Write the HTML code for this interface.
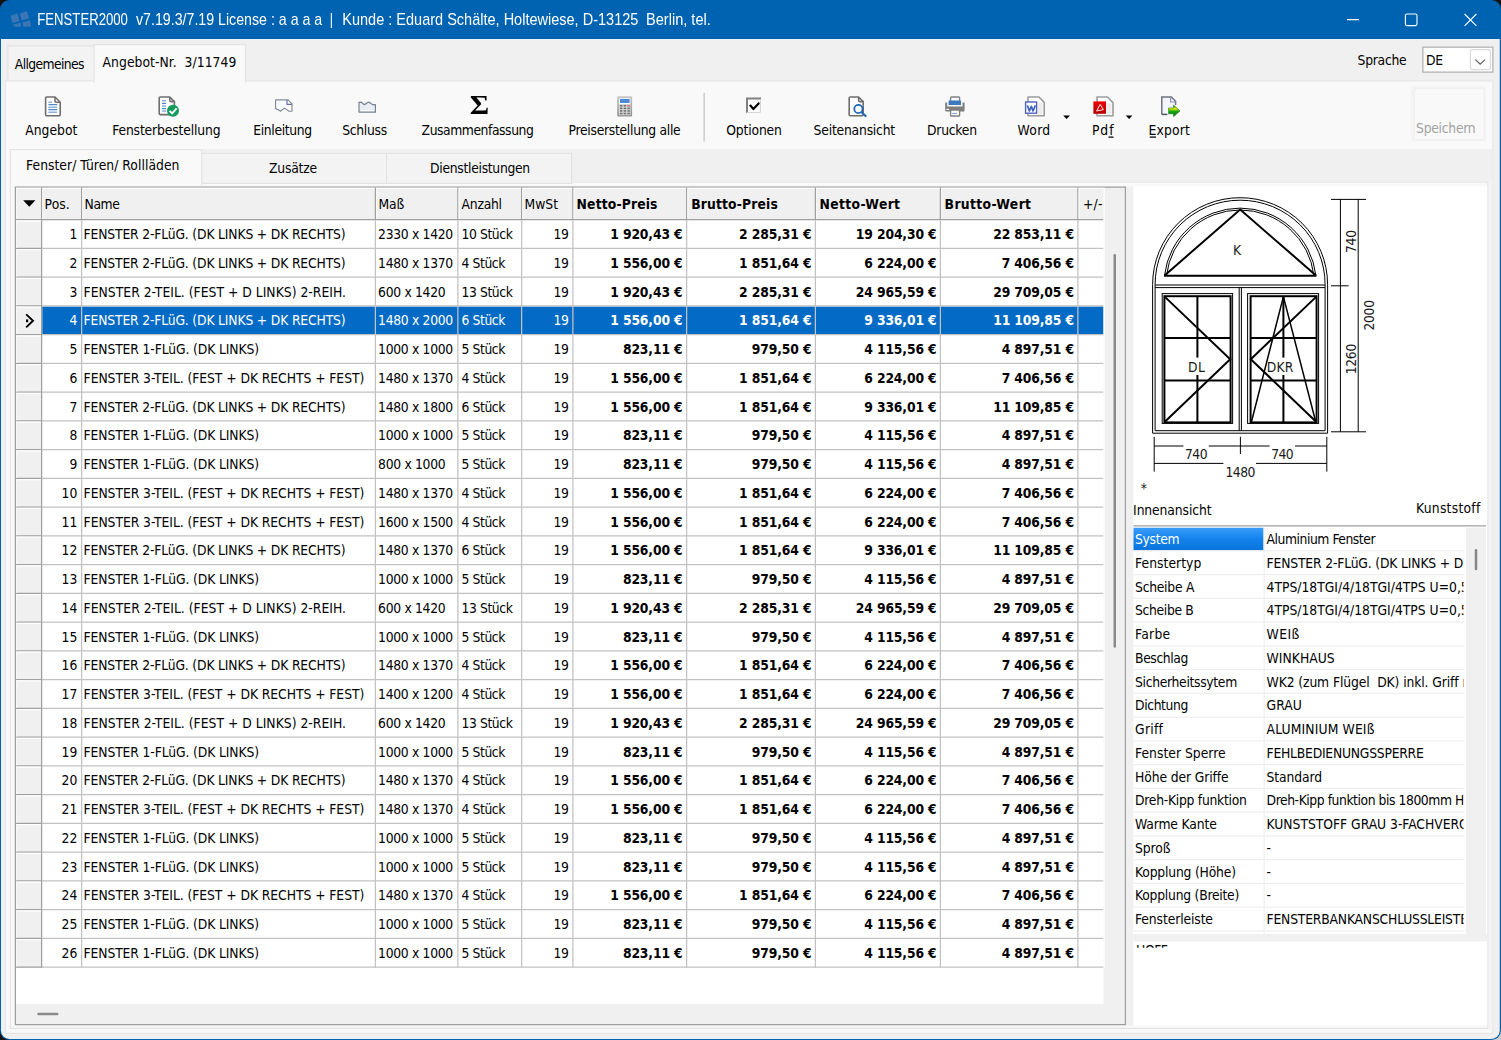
<!DOCTYPE html>
<html lang="de"><head><meta charset="utf-8"><title>FENSTER2000</title>
<style>
html,body{margin:0;padding:0;background:#151311;width:1501px;height:1040px;overflow:hidden}
#brc{position:absolute;left:1490px;top:1029px;width:11px;height:11px;background:#CFCFCF}
#win{position:absolute;left:0;top:0;width:1501px;height:1040px;border-radius:9.5px;overflow:hidden;background:#0063B1}
#s{position:absolute;left:0;top:0;width:1201px;height:832px;transform:translate(-0.25px,0.25px) scale(1.25);transform-origin:0 0;font-family:"DejaVu Sans Condensed","DejaVu Sans","Liberation Sans",sans-serif;font-size:10.7px}
#s div{position:absolute;box-sizing:border-box}
#s svg{position:absolute;overflow:visible}
.t{position:absolute;white-space:pre;margin:0;padding:0}

</style></head><body>
<div id="brc"></div>
<div id="win"><div id="s">
<div style="left:1.00px;top:31.00px;width:1199.20px;height:800.00px;background:#F0F0F0;border-radius:0 0 6.8px 6.8px;"></div>
<span class="t" style="left:29.88px;top:8.00px;font-family:'Liberation Sans','DejaVu Sans',sans-serif;font-size:12.96px;line-height:16px;color:#fff;transform-origin:0 0;transform:scaleX(0.8127);">FENSTER2000</span>
<span class="t" style="left:108.60px;top:8.00px;font-family:'Liberation Sans','DejaVu Sans',sans-serif;font-size:12.96px;line-height:16px;color:#fff;transform-origin:0 0;transform:scaleX(0.8765);">v7.19.3/7.19 License : a a a a</span>
<span class="t" style="left:264.04px;top:8.00px;font-family:'Liberation Sans','DejaVu Sans',sans-serif;font-size:12.96px;line-height:16px;color:#fff;transform-origin:0 0;transform:scaleX(0.7585);">|</span>
<span class="t" style="left:273.72px;top:8.00px;font-family:'Liberation Sans','DejaVu Sans',sans-serif;font-size:12.96px;line-height:16px;color:#fff;transform-origin:0 0;transform:scaleX(0.8964);">Kunde : Eduard Schälte, Holtewiese, D-13125</span>
<span class="t" style="left:517.48px;top:8.00px;font-family:'Liberation Sans','DejaVu Sans',sans-serif;font-size:12.96px;line-height:16px;color:#fff;transform-origin:0 0;transform:scaleX(0.9001);">Berlin, tel.</span>
<div style="left:6.20px;top:36.00px;width:70.00px;height:28.80px;background:#F3F3F3;border:1px solid #E3E3E3;"></div>
<div style="left:4.20px;top:63.80px;width:1191.00px;height:763.20px;background:#F9F9F9;border:1px solid #E5E5E5;"></div>
<div style="left:75.20px;top:34.80px;width:122.00px;height:31.00px;background:#F9F9F9;border:1px solid #E5E5E5;border-bottom:none;"></div>
<span class="t" style="left:12.04px;top:44.00px;font-family:'DejaVu Sans Condensed','DejaVu Sans','Liberation Sans',sans-serif;font-size:11.00px;line-height:16px;color:#000;letter-spacing:-0.496px;">Allgemeines</span>
<span class="t" style="left:82.28px;top:42.00px;font-family:'DejaVu Sans Condensed','DejaVu Sans','Liberation Sans',sans-serif;font-size:11.00px;line-height:16px;color:#000;letter-spacing:0.042px;">Angebot-Nr.  3/11749</span>
<span class="t" style="left:1086.28px;top:41.00px;font-family:'DejaVu Sans Condensed','DejaVu Sans','Liberation Sans',sans-serif;font-size:11.00px;line-height:16px;color:#000;letter-spacing:-0.211px;">Sprache</span>
<div style="left:1138.20px;top:36.80px;width:57.00px;height:21.00px;background:#fff;border:1px solid #ADADAD;"></div>
<div style="left:1176.20px;top:39.20px;width:16.40px;height:16.60px;background:#fff;border:1px solid #DADADA;border-radius:2px;"></div>
<span class="t" style="left:1141.08px;top:41.00px;font-family:'DejaVu Sans Condensed','DejaVu Sans','Liberation Sans',sans-serif;font-size:11.00px;line-height:16px;color:#000;letter-spacing:-0.217px;">DE</span>
<div style="left:8.20px;top:118.80px;width:1186.00px;height:28.00px;background:#F0F0F0;"></div>
<div style="left:8.20px;top:145.40px;width:1185.60px;height:677.80px;background:#F3F3F3;"></div>
<div style="left:8.20px;top:145.40px;width:1183.00px;height:677.80px;background:#F9F9F9;border:1px solid #E5E5E5;"></div>
<div style="left:161.20px;top:121.80px;width:149.00px;height:25.00px;background:#F3F3F3;border:1px solid #E3E3E3;"></div>
<div style="left:310.20px;top:121.80px;width:148.00px;height:25.00px;background:#F3F3F3;border:1px solid #E3E3E3;border-left:none;"></div>
<div style="left:8.20px;top:118.80px;width:154.00px;height:29.00px;background:#F9F9F9;border:1px solid #E5E5E5;border-bottom:none;"></div>
<span class="t" style="left:21.08px;top:125.00px;font-family:'DejaVu Sans Condensed','DejaVu Sans','Liberation Sans',sans-serif;font-size:11.00px;line-height:16px;color:#000;letter-spacing:0.026px;">Fenster/ Türen/ Rollläden</span>
<span class="t" style="left:215.48px;top:127.00px;font-family:'DejaVu Sans Condensed','DejaVu Sans','Liberation Sans',sans-serif;font-size:11.00px;line-height:16px;color:#000;letter-spacing:-0.171px;">Zusätze</span>
<span class="t" style="left:344.28px;top:127.00px;font-family:'DejaVu Sans Condensed','DejaVu Sans','Liberation Sans',sans-serif;font-size:11.00px;line-height:16px;color:#000;letter-spacing:-0.235px;">Dienstleistungen</span>
<div style="left:12.00px;top:149.00px;width:889.00px;height:671.00px;background:#F0F0F0;border:1px solid #A0A0A0;"></div>
<div style="left:13.00px;top:176.00px;width:870.00px;height:627.00px;background:#fff;"></div>
<div style="left:13.00px;top:176.00px;width:20.00px;height:598.00px;background:#F0F0F0;"></div>
<div style="left:34.00px;top:245.00px;width:849.00px;height:22.00px;background:#036BC5;"></div>
<div style="left:13.00px;top:175.00px;width:870.00px;height:1.00px;background:#A0A0A0;"></div>
<div style="left:13.00px;top:198.00px;width:21.00px;height:1.00px;background:#A0A0A0;"></div>
<div style="left:34.00px;top:198.00px;width:849.00px;height:1.00px;background:#C2C2C2;"></div>
<div style="left:13.00px;top:221.00px;width:21.00px;height:1.00px;background:#A0A0A0;"></div>
<div style="left:34.00px;top:221.00px;width:849.00px;height:1.00px;background:#C2C2C2;"></div>
<div style="left:13.00px;top:244.00px;width:21.00px;height:1.00px;background:#A0A0A0;"></div>
<div style="left:34.00px;top:244.00px;width:849.00px;height:1.00px;background:#C2C2C2;"></div>
<div style="left:13.00px;top:267.00px;width:21.00px;height:1.00px;background:#A0A0A0;"></div>
<div style="left:34.00px;top:267.00px;width:849.00px;height:1.00px;background:#C2C2C2;"></div>
<div style="left:13.00px;top:290.00px;width:21.00px;height:1.00px;background:#A0A0A0;"></div>
<div style="left:34.00px;top:290.00px;width:849.00px;height:1.00px;background:#C2C2C2;"></div>
<div style="left:13.00px;top:313.00px;width:21.00px;height:1.00px;background:#A0A0A0;"></div>
<div style="left:34.00px;top:313.00px;width:849.00px;height:1.00px;background:#C2C2C2;"></div>
<div style="left:13.00px;top:336.00px;width:21.00px;height:1.00px;background:#A0A0A0;"></div>
<div style="left:34.00px;top:336.00px;width:849.00px;height:1.00px;background:#C2C2C2;"></div>
<div style="left:13.00px;top:359.00px;width:21.00px;height:1.00px;background:#A0A0A0;"></div>
<div style="left:34.00px;top:359.00px;width:849.00px;height:1.00px;background:#C2C2C2;"></div>
<div style="left:13.00px;top:382.00px;width:21.00px;height:1.00px;background:#A0A0A0;"></div>
<div style="left:34.00px;top:382.00px;width:849.00px;height:1.00px;background:#C2C2C2;"></div>
<div style="left:13.00px;top:405.00px;width:21.00px;height:1.00px;background:#A0A0A0;"></div>
<div style="left:34.00px;top:405.00px;width:849.00px;height:1.00px;background:#C2C2C2;"></div>
<div style="left:13.00px;top:428.00px;width:21.00px;height:1.00px;background:#A0A0A0;"></div>
<div style="left:34.00px;top:428.00px;width:849.00px;height:1.00px;background:#C2C2C2;"></div>
<div style="left:13.00px;top:451.00px;width:21.00px;height:1.00px;background:#A0A0A0;"></div>
<div style="left:34.00px;top:451.00px;width:849.00px;height:1.00px;background:#C2C2C2;"></div>
<div style="left:13.00px;top:474.00px;width:21.00px;height:1.00px;background:#A0A0A0;"></div>
<div style="left:34.00px;top:474.00px;width:849.00px;height:1.00px;background:#C2C2C2;"></div>
<div style="left:13.00px;top:497.00px;width:21.00px;height:1.00px;background:#A0A0A0;"></div>
<div style="left:34.00px;top:497.00px;width:849.00px;height:1.00px;background:#C2C2C2;"></div>
<div style="left:13.00px;top:520.00px;width:21.00px;height:1.00px;background:#A0A0A0;"></div>
<div style="left:34.00px;top:520.00px;width:849.00px;height:1.00px;background:#C2C2C2;"></div>
<div style="left:13.00px;top:543.00px;width:21.00px;height:1.00px;background:#A0A0A0;"></div>
<div style="left:34.00px;top:543.00px;width:849.00px;height:1.00px;background:#C2C2C2;"></div>
<div style="left:13.00px;top:566.00px;width:21.00px;height:1.00px;background:#A0A0A0;"></div>
<div style="left:34.00px;top:566.00px;width:849.00px;height:1.00px;background:#C2C2C2;"></div>
<div style="left:13.00px;top:589.00px;width:21.00px;height:1.00px;background:#A0A0A0;"></div>
<div style="left:34.00px;top:589.00px;width:849.00px;height:1.00px;background:#C2C2C2;"></div>
<div style="left:13.00px;top:612.00px;width:21.00px;height:1.00px;background:#A0A0A0;"></div>
<div style="left:34.00px;top:612.00px;width:849.00px;height:1.00px;background:#C2C2C2;"></div>
<div style="left:13.00px;top:635.00px;width:21.00px;height:1.00px;background:#A0A0A0;"></div>
<div style="left:34.00px;top:635.00px;width:849.00px;height:1.00px;background:#C2C2C2;"></div>
<div style="left:13.00px;top:658.00px;width:21.00px;height:1.00px;background:#A0A0A0;"></div>
<div style="left:34.00px;top:658.00px;width:849.00px;height:1.00px;background:#C2C2C2;"></div>
<div style="left:13.00px;top:681.00px;width:21.00px;height:1.00px;background:#A0A0A0;"></div>
<div style="left:34.00px;top:681.00px;width:849.00px;height:1.00px;background:#C2C2C2;"></div>
<div style="left:13.00px;top:704.00px;width:21.00px;height:1.00px;background:#A0A0A0;"></div>
<div style="left:34.00px;top:704.00px;width:849.00px;height:1.00px;background:#C2C2C2;"></div>
<div style="left:13.00px;top:727.00px;width:21.00px;height:1.00px;background:#A0A0A0;"></div>
<div style="left:34.00px;top:727.00px;width:849.00px;height:1.00px;background:#C2C2C2;"></div>
<div style="left:13.00px;top:750.00px;width:21.00px;height:1.00px;background:#A0A0A0;"></div>
<div style="left:34.00px;top:750.00px;width:849.00px;height:1.00px;background:#C2C2C2;"></div>
<div style="left:13.00px;top:773.00px;width:21.00px;height:1.00px;background:#A0A0A0;"></div>
<div style="left:34.00px;top:773.00px;width:849.00px;height:1.00px;background:#C2C2C2;"></div>
<div style="left:33.00px;top:150.00px;width:1.00px;height:26.00px;background:#A0A0A0;"></div>
<div style="left:33.00px;top:176.00px;width:1.00px;height:598.00px;background:#A0A0A0;"></div>
<div style="left:65.00px;top:150.00px;width:1.00px;height:26.00px;background:#A0A0A0;"></div>
<div style="left:65.00px;top:176.00px;width:1.00px;height:598.00px;background:#C2C2C2;"></div>
<div style="left:300.00px;top:150.00px;width:1.00px;height:26.00px;background:#A0A0A0;"></div>
<div style="left:300.00px;top:176.00px;width:1.00px;height:598.00px;background:#C2C2C2;"></div>
<div style="left:366.00px;top:150.00px;width:1.00px;height:26.00px;background:#A0A0A0;"></div>
<div style="left:366.00px;top:176.00px;width:1.00px;height:598.00px;background:#C2C2C2;"></div>
<div style="left:417.00px;top:150.00px;width:1.00px;height:26.00px;background:#A0A0A0;"></div>
<div style="left:417.00px;top:176.00px;width:1.00px;height:598.00px;background:#C2C2C2;"></div>
<div style="left:458.00px;top:150.00px;width:1.00px;height:26.00px;background:#A0A0A0;"></div>
<div style="left:458.00px;top:176.00px;width:1.00px;height:598.00px;background:#C2C2C2;"></div>
<div style="left:549.00px;top:150.00px;width:1.00px;height:26.00px;background:#A0A0A0;"></div>
<div style="left:549.00px;top:176.00px;width:1.00px;height:598.00px;background:#C2C2C2;"></div>
<div style="left:652.00px;top:150.00px;width:1.00px;height:26.00px;background:#A0A0A0;"></div>
<div style="left:652.00px;top:176.00px;width:1.00px;height:598.00px;background:#C2C2C2;"></div>
<div style="left:752.00px;top:150.00px;width:1.00px;height:26.00px;background:#A0A0A0;"></div>
<div style="left:752.00px;top:176.00px;width:1.00px;height:598.00px;background:#C2C2C2;"></div>
<div style="left:862.00px;top:150.00px;width:1.00px;height:26.00px;background:#A0A0A0;"></div>
<div style="left:862.00px;top:176.00px;width:1.00px;height:598.00px;background:#C2C2C2;"></div>
<div style="left:13.00px;top:150.00px;width:20.00px;height:1.00px;background:#fff;"></div>
<div style="left:13.00px;top:151.00px;width:1.00px;height:24.00px;background:#F8F8F8;"></div>
<div style="left:34.00px;top:150.00px;width:31.00px;height:1.00px;background:#fff;"></div>
<div style="left:34.00px;top:151.00px;width:1.00px;height:24.00px;background:#F8F8F8;"></div>
<div style="left:66.00px;top:150.00px;width:234.00px;height:1.00px;background:#fff;"></div>
<div style="left:66.00px;top:151.00px;width:1.00px;height:24.00px;background:#F8F8F8;"></div>
<div style="left:301.00px;top:150.00px;width:65.00px;height:1.00px;background:#fff;"></div>
<div style="left:301.00px;top:151.00px;width:1.00px;height:24.00px;background:#F8F8F8;"></div>
<div style="left:367.00px;top:150.00px;width:50.00px;height:1.00px;background:#fff;"></div>
<div style="left:367.00px;top:151.00px;width:1.00px;height:24.00px;background:#F8F8F8;"></div>
<div style="left:418.00px;top:150.00px;width:40.00px;height:1.00px;background:#fff;"></div>
<div style="left:418.00px;top:151.00px;width:1.00px;height:24.00px;background:#F8F8F8;"></div>
<div style="left:459.00px;top:150.00px;width:90.00px;height:1.00px;background:#fff;"></div>
<div style="left:459.00px;top:151.00px;width:1.00px;height:24.00px;background:#F8F8F8;"></div>
<div style="left:550.00px;top:150.00px;width:102.00px;height:1.00px;background:#fff;"></div>
<div style="left:550.00px;top:151.00px;width:1.00px;height:24.00px;background:#F8F8F8;"></div>
<div style="left:653.00px;top:150.00px;width:99.00px;height:1.00px;background:#fff;"></div>
<div style="left:653.00px;top:151.00px;width:1.00px;height:24.00px;background:#F8F8F8;"></div>
<div style="left:753.00px;top:150.00px;width:109.00px;height:1.00px;background:#fff;"></div>
<div style="left:753.00px;top:151.00px;width:1.00px;height:24.00px;background:#F8F8F8;"></div>
<div style="left:863.00px;top:150.00px;width:20.00px;height:1.00px;background:#fff;"></div>
<div style="left:863.00px;top:151.00px;width:1.00px;height:24.00px;background:#F8F8F8;"></div>
<div style="left:883.00px;top:150.00px;width:1.00px;height:624.00px;background:#fff;"></div>
<div style="left:13.00px;top:176.00px;width:20.00px;height:1.00px;background:#fff;"></div>
<div style="left:13.00px;top:177.00px;width:1.00px;height:21.00px;background:#F8F8F8;"></div>
<div style="left:13.00px;top:199.00px;width:20.00px;height:1.00px;background:#fff;"></div>
<div style="left:13.00px;top:200.00px;width:1.00px;height:21.00px;background:#F8F8F8;"></div>
<div style="left:13.00px;top:222.00px;width:20.00px;height:1.00px;background:#fff;"></div>
<div style="left:13.00px;top:223.00px;width:1.00px;height:21.00px;background:#F8F8F8;"></div>
<div style="left:13.00px;top:245.00px;width:20.00px;height:1.00px;background:#fff;"></div>
<div style="left:13.00px;top:246.00px;width:1.00px;height:21.00px;background:#F8F8F8;"></div>
<div style="left:13.00px;top:268.00px;width:20.00px;height:1.00px;background:#fff;"></div>
<div style="left:13.00px;top:269.00px;width:1.00px;height:21.00px;background:#F8F8F8;"></div>
<div style="left:13.00px;top:291.00px;width:20.00px;height:1.00px;background:#fff;"></div>
<div style="left:13.00px;top:292.00px;width:1.00px;height:21.00px;background:#F8F8F8;"></div>
<div style="left:13.00px;top:314.00px;width:20.00px;height:1.00px;background:#fff;"></div>
<div style="left:13.00px;top:315.00px;width:1.00px;height:21.00px;background:#F8F8F8;"></div>
<div style="left:13.00px;top:337.00px;width:20.00px;height:1.00px;background:#fff;"></div>
<div style="left:13.00px;top:338.00px;width:1.00px;height:21.00px;background:#F8F8F8;"></div>
<div style="left:13.00px;top:360.00px;width:20.00px;height:1.00px;background:#fff;"></div>
<div style="left:13.00px;top:361.00px;width:1.00px;height:21.00px;background:#F8F8F8;"></div>
<div style="left:13.00px;top:383.00px;width:20.00px;height:1.00px;background:#fff;"></div>
<div style="left:13.00px;top:384.00px;width:1.00px;height:21.00px;background:#F8F8F8;"></div>
<div style="left:13.00px;top:406.00px;width:20.00px;height:1.00px;background:#fff;"></div>
<div style="left:13.00px;top:407.00px;width:1.00px;height:21.00px;background:#F8F8F8;"></div>
<div style="left:13.00px;top:429.00px;width:20.00px;height:1.00px;background:#fff;"></div>
<div style="left:13.00px;top:430.00px;width:1.00px;height:21.00px;background:#F8F8F8;"></div>
<div style="left:13.00px;top:452.00px;width:20.00px;height:1.00px;background:#fff;"></div>
<div style="left:13.00px;top:453.00px;width:1.00px;height:21.00px;background:#F8F8F8;"></div>
<div style="left:13.00px;top:475.00px;width:20.00px;height:1.00px;background:#fff;"></div>
<div style="left:13.00px;top:476.00px;width:1.00px;height:21.00px;background:#F8F8F8;"></div>
<div style="left:13.00px;top:498.00px;width:20.00px;height:1.00px;background:#fff;"></div>
<div style="left:13.00px;top:499.00px;width:1.00px;height:21.00px;background:#F8F8F8;"></div>
<div style="left:13.00px;top:521.00px;width:20.00px;height:1.00px;background:#fff;"></div>
<div style="left:13.00px;top:522.00px;width:1.00px;height:21.00px;background:#F8F8F8;"></div>
<div style="left:13.00px;top:544.00px;width:20.00px;height:1.00px;background:#fff;"></div>
<div style="left:13.00px;top:545.00px;width:1.00px;height:21.00px;background:#F8F8F8;"></div>
<div style="left:13.00px;top:567.00px;width:20.00px;height:1.00px;background:#fff;"></div>
<div style="left:13.00px;top:568.00px;width:1.00px;height:21.00px;background:#F8F8F8;"></div>
<div style="left:13.00px;top:590.00px;width:20.00px;height:1.00px;background:#fff;"></div>
<div style="left:13.00px;top:591.00px;width:1.00px;height:21.00px;background:#F8F8F8;"></div>
<div style="left:13.00px;top:613.00px;width:20.00px;height:1.00px;background:#fff;"></div>
<div style="left:13.00px;top:614.00px;width:1.00px;height:21.00px;background:#F8F8F8;"></div>
<div style="left:13.00px;top:636.00px;width:20.00px;height:1.00px;background:#fff;"></div>
<div style="left:13.00px;top:637.00px;width:1.00px;height:21.00px;background:#F8F8F8;"></div>
<div style="left:13.00px;top:659.00px;width:20.00px;height:1.00px;background:#fff;"></div>
<div style="left:13.00px;top:660.00px;width:1.00px;height:21.00px;background:#F8F8F8;"></div>
<div style="left:13.00px;top:682.00px;width:20.00px;height:1.00px;background:#fff;"></div>
<div style="left:13.00px;top:683.00px;width:1.00px;height:21.00px;background:#F8F8F8;"></div>
<div style="left:13.00px;top:705.00px;width:20.00px;height:1.00px;background:#fff;"></div>
<div style="left:13.00px;top:706.00px;width:1.00px;height:21.00px;background:#F8F8F8;"></div>
<div style="left:13.00px;top:728.00px;width:20.00px;height:1.00px;background:#fff;"></div>
<div style="left:13.00px;top:729.00px;width:1.00px;height:21.00px;background:#F8F8F8;"></div>
<div style="left:13.00px;top:751.00px;width:20.00px;height:1.00px;background:#fff;"></div>
<div style="left:13.00px;top:752.00px;width:1.00px;height:21.00px;background:#F8F8F8;"></div>
<div style="left:29.80px;top:810.36px;width:17.20px;height:1.76px;background:#8A8A8A;border-radius:1px;"></div>
<div style="left:890.84px;top:203.00px;width:2.16px;height:315.04px;background:#8A8A8A;border-radius:1px;"></div>
<div style="left:901.20px;top:148.80px;width:6.00px;height:671.16px;background:#F0F0F0;"></div>
<span class="t" style="left:35.88px;top:156.00px;font-family:'DejaVu Sans Condensed','DejaVu Sans','Liberation Sans',sans-serif;font-size:11.00px;line-height:16px;color:#000;letter-spacing:0.076px;">Pos.</span>
<span class="t" style="left:67.88px;top:156.00px;font-family:'DejaVu Sans Condensed','DejaVu Sans','Liberation Sans',sans-serif;font-size:11.00px;line-height:16px;color:#000;letter-spacing:-0.341px;">Name</span>
<span class="t" style="left:303.08px;top:156.00px;font-family:'DejaVu Sans Condensed','DejaVu Sans','Liberation Sans',sans-serif;font-size:11.00px;line-height:16px;color:#000;letter-spacing:-0.175px;">Maß</span>
<span class="t" style="left:369.48px;top:156.00px;font-family:'DejaVu Sans Condensed','DejaVu Sans','Liberation Sans',sans-serif;font-size:11.00px;line-height:16px;color:#000;letter-spacing:-0.195px;">Anzahl</span>
<span class="t" style="left:419.88px;top:156.00px;font-family:'DejaVu Sans Condensed','DejaVu Sans','Liberation Sans',sans-serif;font-size:11.00px;line-height:16px;color:#000;letter-spacing:-0.019px;">MwSt</span>
<span class="t" style="left:461.48px;top:156.00px;font-family:'DejaVu Sans Condensed','DejaVu Sans','Liberation Sans',sans-serif;font-size:11.00px;line-height:16px;color:#000;font-weight:bold;letter-spacing:0.121px;">Netto-Preis</span>
<span class="t" style="left:553.16px;top:156.00px;font-family:'DejaVu Sans Condensed','DejaVu Sans','Liberation Sans',sans-serif;font-size:11.00px;line-height:16px;color:#000;font-weight:bold;letter-spacing:0.121px;">Brutto-Preis</span>
<span class="t" style="left:655.88px;top:156.00px;font-family:'DejaVu Sans Condensed','DejaVu Sans','Liberation Sans',sans-serif;font-size:11.00px;line-height:16px;color:#000;font-weight:bold;letter-spacing:0.291px;">Netto-Wert</span>
<span class="t" style="left:755.88px;top:156.00px;font-family:'DejaVu Sans Condensed','DejaVu Sans','Liberation Sans',sans-serif;font-size:11.00px;line-height:16px;color:#000;font-weight:bold;letter-spacing:0.293px;">Brutto-Wert</span>
<span class="t" style="left:866.60px;top:156.00px;font-family:'DejaVu Sans Condensed','DejaVu Sans','Liberation Sans',sans-serif;font-size:11.00px;line-height:16px;color:#000;letter-spacing:0.212px;">+/-</span>
<span class="t" style="left:55.82px;top:180.00px;font-family:'DejaVu Sans Condensed','DejaVu Sans','Liberation Sans',sans-serif;font-size:11.00px;line-height:16px;color:#000;letter-spacing:0.183px;">1</span>
<span class="t" style="left:67.08px;top:180.00px;font-family:'DejaVu Sans Condensed','DejaVu Sans','Liberation Sans',sans-serif;font-size:11.00px;line-height:16px;color:#000;letter-spacing:-0.127px;">FENSTER 2-FLüG. (DK LINKS + DK RECHTS)</span>
<span class="t" style="left:302.68px;top:180.00px;font-family:'DejaVu Sans Condensed','DejaVu Sans','Liberation Sans',sans-serif;font-size:11.00px;line-height:16px;color:#000;letter-spacing:-0.242px;">2330 x 1420</span>
<span class="t" style="left:369.48px;top:180.00px;font-family:'DejaVu Sans Condensed','DejaVu Sans','Liberation Sans',sans-serif;font-size:11.00px;line-height:16px;color:#000;letter-spacing:-0.338px;">10 Stück</span>
<span class="t" style="left:443.10px;top:180.00px;font-family:'DejaVu Sans Condensed','DejaVu Sans','Liberation Sans',sans-serif;font-size:11.00px;line-height:16px;color:#000;letter-spacing:-0.377px;">19</span>
<span class="t" style="left:488.40px;top:180.00px;font-family:'DejaVu Sans Condensed','DejaVu Sans','Liberation Sans',sans-serif;font-size:11.00px;line-height:16px;color:#000;font-weight:bold;letter-spacing:-0.099px;">1 920,43 €</span>
<span class="t" style="left:591.44px;top:180.00px;font-family:'DejaVu Sans Condensed','DejaVu Sans','Liberation Sans',sans-serif;font-size:11.00px;line-height:16px;color:#000;font-weight:bold;letter-spacing:-0.099px;">2 285,31 €</span>
<span class="t" style="left:684.82px;top:180.00px;font-family:'DejaVu Sans Condensed','DejaVu Sans','Liberation Sans',sans-serif;font-size:11.00px;line-height:16px;color:#000;font-weight:bold;letter-spacing:-0.099px;">19 204,30 €</span>
<span class="t" style="left:794.74px;top:180.00px;font-family:'DejaVu Sans Condensed','DejaVu Sans','Liberation Sans',sans-serif;font-size:11.00px;line-height:16px;color:#000;font-weight:bold;letter-spacing:-0.099px;">22 853,11 €</span>
<span class="t" style="left:55.82px;top:203.00px;font-family:'DejaVu Sans Condensed','DejaVu Sans','Liberation Sans',sans-serif;font-size:11.00px;line-height:16px;color:#000;letter-spacing:0.183px;">2</span>
<span class="t" style="left:67.08px;top:203.00px;font-family:'DejaVu Sans Condensed','DejaVu Sans','Liberation Sans',sans-serif;font-size:11.00px;line-height:16px;color:#000;letter-spacing:-0.127px;">FENSTER 2-FLüG. (DK LINKS + DK RECHTS)</span>
<span class="t" style="left:302.68px;top:203.00px;font-family:'DejaVu Sans Condensed','DejaVu Sans','Liberation Sans',sans-serif;font-size:11.00px;line-height:16px;color:#000;letter-spacing:-0.242px;">1480 x 1370</span>
<span class="t" style="left:369.48px;top:203.00px;font-family:'DejaVu Sans Condensed','DejaVu Sans','Liberation Sans',sans-serif;font-size:11.00px;line-height:16px;color:#000;letter-spacing:-0.338px;">4 Stück</span>
<span class="t" style="left:443.10px;top:203.00px;font-family:'DejaVu Sans Condensed','DejaVu Sans','Liberation Sans',sans-serif;font-size:11.00px;line-height:16px;color:#000;letter-spacing:-0.377px;">19</span>
<span class="t" style="left:488.40px;top:203.00px;font-family:'DejaVu Sans Condensed','DejaVu Sans','Liberation Sans',sans-serif;font-size:11.00px;line-height:16px;color:#000;font-weight:bold;letter-spacing:-0.099px;">1 556,00 €</span>
<span class="t" style="left:591.44px;top:203.00px;font-family:'DejaVu Sans Condensed','DejaVu Sans','Liberation Sans',sans-serif;font-size:11.00px;line-height:16px;color:#000;font-weight:bold;letter-spacing:-0.099px;">1 851,64 €</span>
<span class="t" style="left:691.60px;top:203.00px;font-family:'DejaVu Sans Condensed','DejaVu Sans','Liberation Sans',sans-serif;font-size:11.00px;line-height:16px;color:#000;font-weight:bold;letter-spacing:-0.099px;">6 224,00 €</span>
<span class="t" style="left:801.52px;top:203.00px;font-family:'DejaVu Sans Condensed','DejaVu Sans','Liberation Sans',sans-serif;font-size:11.00px;line-height:16px;color:#000;font-weight:bold;letter-spacing:-0.099px;">7 406,56 €</span>
<span class="t" style="left:55.82px;top:226.00px;font-family:'DejaVu Sans Condensed','DejaVu Sans','Liberation Sans',sans-serif;font-size:11.00px;line-height:16px;color:#000;letter-spacing:0.183px;">3</span>
<span class="t" style="left:67.08px;top:226.00px;font-family:'DejaVu Sans Condensed','DejaVu Sans','Liberation Sans',sans-serif;font-size:11.00px;line-height:16px;color:#000;letter-spacing:0.018px;">FENSTER 2-TEIL. (FEST + D LINKS) 2-REIH.</span>
<span class="t" style="left:302.68px;top:226.00px;font-family:'DejaVu Sans Condensed','DejaVu Sans','Liberation Sans',sans-serif;font-size:11.00px;line-height:16px;color:#000;letter-spacing:-0.242px;">600 x 1420</span>
<span class="t" style="left:369.48px;top:226.00px;font-family:'DejaVu Sans Condensed','DejaVu Sans','Liberation Sans',sans-serif;font-size:11.00px;line-height:16px;color:#000;letter-spacing:-0.338px;">13 Stück</span>
<span class="t" style="left:443.10px;top:226.00px;font-family:'DejaVu Sans Condensed','DejaVu Sans','Liberation Sans',sans-serif;font-size:11.00px;line-height:16px;color:#000;letter-spacing:-0.377px;">19</span>
<span class="t" style="left:488.40px;top:226.00px;font-family:'DejaVu Sans Condensed','DejaVu Sans','Liberation Sans',sans-serif;font-size:11.00px;line-height:16px;color:#000;font-weight:bold;letter-spacing:-0.099px;">1 920,43 €</span>
<span class="t" style="left:591.44px;top:226.00px;font-family:'DejaVu Sans Condensed','DejaVu Sans','Liberation Sans',sans-serif;font-size:11.00px;line-height:16px;color:#000;font-weight:bold;letter-spacing:-0.099px;">2 285,31 €</span>
<span class="t" style="left:684.82px;top:226.00px;font-family:'DejaVu Sans Condensed','DejaVu Sans','Liberation Sans',sans-serif;font-size:11.00px;line-height:16px;color:#000;font-weight:bold;letter-spacing:-0.099px;">24 965,59 €</span>
<span class="t" style="left:794.74px;top:226.00px;font-family:'DejaVu Sans Condensed','DejaVu Sans','Liberation Sans',sans-serif;font-size:11.00px;line-height:16px;color:#000;font-weight:bold;letter-spacing:-0.099px;">29 709,05 €</span>
<span class="t" style="left:55.82px;top:249.00px;font-family:'DejaVu Sans Condensed','DejaVu Sans','Liberation Sans',sans-serif;font-size:11.00px;line-height:16px;color:#fff;letter-spacing:0.183px;">4</span>
<span class="t" style="left:67.08px;top:249.00px;font-family:'DejaVu Sans Condensed','DejaVu Sans','Liberation Sans',sans-serif;font-size:11.00px;line-height:16px;color:#fff;letter-spacing:-0.127px;">FENSTER 2-FLüG. (DK LINKS + DK RECHTS)</span>
<span class="t" style="left:302.68px;top:249.00px;font-family:'DejaVu Sans Condensed','DejaVu Sans','Liberation Sans',sans-serif;font-size:11.00px;line-height:16px;color:#fff;letter-spacing:-0.242px;">1480 x 2000</span>
<span class="t" style="left:369.48px;top:249.00px;font-family:'DejaVu Sans Condensed','DejaVu Sans','Liberation Sans',sans-serif;font-size:11.00px;line-height:16px;color:#fff;letter-spacing:-0.338px;">6 Stück</span>
<span class="t" style="left:443.10px;top:249.00px;font-family:'DejaVu Sans Condensed','DejaVu Sans','Liberation Sans',sans-serif;font-size:11.00px;line-height:16px;color:#fff;letter-spacing:-0.377px;">19</span>
<span class="t" style="left:488.40px;top:249.00px;font-family:'DejaVu Sans Condensed','DejaVu Sans','Liberation Sans',sans-serif;font-size:11.00px;line-height:16px;color:#fff;font-weight:bold;letter-spacing:-0.099px;">1 556,00 €</span>
<span class="t" style="left:591.44px;top:249.00px;font-family:'DejaVu Sans Condensed','DejaVu Sans','Liberation Sans',sans-serif;font-size:11.00px;line-height:16px;color:#fff;font-weight:bold;letter-spacing:-0.099px;">1 851,64 €</span>
<span class="t" style="left:691.60px;top:249.00px;font-family:'DejaVu Sans Condensed','DejaVu Sans','Liberation Sans',sans-serif;font-size:11.00px;line-height:16px;color:#fff;font-weight:bold;letter-spacing:-0.099px;">9 336,01 €</span>
<span class="t" style="left:794.74px;top:249.00px;font-family:'DejaVu Sans Condensed','DejaVu Sans','Liberation Sans',sans-serif;font-size:11.00px;line-height:16px;color:#fff;font-weight:bold;letter-spacing:-0.099px;">11 109,85 €</span>
<span class="t" style="left:55.82px;top:272.00px;font-family:'DejaVu Sans Condensed','DejaVu Sans','Liberation Sans',sans-serif;font-size:11.00px;line-height:16px;color:#000;letter-spacing:0.183px;">5</span>
<span class="t" style="left:67.08px;top:272.00px;font-family:'DejaVu Sans Condensed','DejaVu Sans','Liberation Sans',sans-serif;font-size:11.00px;line-height:16px;color:#000;letter-spacing:-0.092px;">FENSTER 1-FLüG. (DK LINKS)</span>
<span class="t" style="left:302.68px;top:272.00px;font-family:'DejaVu Sans Condensed','DejaVu Sans','Liberation Sans',sans-serif;font-size:11.00px;line-height:16px;color:#000;letter-spacing:-0.242px;">1000 x 1000</span>
<span class="t" style="left:369.48px;top:272.00px;font-family:'DejaVu Sans Condensed','DejaVu Sans','Liberation Sans',sans-serif;font-size:11.00px;line-height:16px;color:#000;letter-spacing:-0.338px;">5 Stück</span>
<span class="t" style="left:443.10px;top:272.00px;font-family:'DejaVu Sans Condensed','DejaVu Sans','Liberation Sans',sans-serif;font-size:11.00px;line-height:16px;color:#000;letter-spacing:-0.377px;">19</span>
<span class="t" style="left:498.53px;top:272.00px;font-family:'DejaVu Sans Condensed','DejaVu Sans','Liberation Sans',sans-serif;font-size:11.00px;line-height:16px;color:#000;font-weight:bold;letter-spacing:-0.099px;">823,11 €</span>
<span class="t" style="left:601.57px;top:272.00px;font-family:'DejaVu Sans Condensed','DejaVu Sans','Liberation Sans',sans-serif;font-size:11.00px;line-height:16px;color:#000;font-weight:bold;letter-spacing:-0.099px;">979,50 €</span>
<span class="t" style="left:691.60px;top:272.00px;font-family:'DejaVu Sans Condensed','DejaVu Sans','Liberation Sans',sans-serif;font-size:11.00px;line-height:16px;color:#000;font-weight:bold;letter-spacing:-0.099px;">4 115,56 €</span>
<span class="t" style="left:801.52px;top:272.00px;font-family:'DejaVu Sans Condensed','DejaVu Sans','Liberation Sans',sans-serif;font-size:11.00px;line-height:16px;color:#000;font-weight:bold;letter-spacing:-0.099px;">4 897,51 €</span>
<span class="t" style="left:55.82px;top:295.00px;font-family:'DejaVu Sans Condensed','DejaVu Sans','Liberation Sans',sans-serif;font-size:11.00px;line-height:16px;color:#000;letter-spacing:0.183px;">6</span>
<span class="t" style="left:67.08px;top:295.00px;font-family:'DejaVu Sans Condensed','DejaVu Sans','Liberation Sans',sans-serif;font-size:11.00px;line-height:16px;color:#000;letter-spacing:-0.044px;">FENSTER 3-TEIL. (FEST + DK RECHTS + FEST)</span>
<span class="t" style="left:302.68px;top:295.00px;font-family:'DejaVu Sans Condensed','DejaVu Sans','Liberation Sans',sans-serif;font-size:11.00px;line-height:16px;color:#000;letter-spacing:-0.242px;">1480 x 1370</span>
<span class="t" style="left:369.48px;top:295.00px;font-family:'DejaVu Sans Condensed','DejaVu Sans','Liberation Sans',sans-serif;font-size:11.00px;line-height:16px;color:#000;letter-spacing:-0.338px;">4 Stück</span>
<span class="t" style="left:443.10px;top:295.00px;font-family:'DejaVu Sans Condensed','DejaVu Sans','Liberation Sans',sans-serif;font-size:11.00px;line-height:16px;color:#000;letter-spacing:-0.377px;">19</span>
<span class="t" style="left:488.40px;top:295.00px;font-family:'DejaVu Sans Condensed','DejaVu Sans','Liberation Sans',sans-serif;font-size:11.00px;line-height:16px;color:#000;font-weight:bold;letter-spacing:-0.099px;">1 556,00 €</span>
<span class="t" style="left:591.44px;top:295.00px;font-family:'DejaVu Sans Condensed','DejaVu Sans','Liberation Sans',sans-serif;font-size:11.00px;line-height:16px;color:#000;font-weight:bold;letter-spacing:-0.099px;">1 851,64 €</span>
<span class="t" style="left:691.60px;top:295.00px;font-family:'DejaVu Sans Condensed','DejaVu Sans','Liberation Sans',sans-serif;font-size:11.00px;line-height:16px;color:#000;font-weight:bold;letter-spacing:-0.099px;">6 224,00 €</span>
<span class="t" style="left:801.52px;top:295.00px;font-family:'DejaVu Sans Condensed','DejaVu Sans','Liberation Sans',sans-serif;font-size:11.00px;line-height:16px;color:#000;font-weight:bold;letter-spacing:-0.099px;">7 406,56 €</span>
<span class="t" style="left:55.82px;top:318.00px;font-family:'DejaVu Sans Condensed','DejaVu Sans','Liberation Sans',sans-serif;font-size:11.00px;line-height:16px;color:#000;letter-spacing:0.183px;">7</span>
<span class="t" style="left:67.08px;top:318.00px;font-family:'DejaVu Sans Condensed','DejaVu Sans','Liberation Sans',sans-serif;font-size:11.00px;line-height:16px;color:#000;letter-spacing:-0.127px;">FENSTER 2-FLüG. (DK LINKS + DK RECHTS)</span>
<span class="t" style="left:302.68px;top:318.00px;font-family:'DejaVu Sans Condensed','DejaVu Sans','Liberation Sans',sans-serif;font-size:11.00px;line-height:16px;color:#000;letter-spacing:-0.242px;">1480 x 1800</span>
<span class="t" style="left:369.48px;top:318.00px;font-family:'DejaVu Sans Condensed','DejaVu Sans','Liberation Sans',sans-serif;font-size:11.00px;line-height:16px;color:#000;letter-spacing:-0.338px;">6 Stück</span>
<span class="t" style="left:443.10px;top:318.00px;font-family:'DejaVu Sans Condensed','DejaVu Sans','Liberation Sans',sans-serif;font-size:11.00px;line-height:16px;color:#000;letter-spacing:-0.377px;">19</span>
<span class="t" style="left:488.40px;top:318.00px;font-family:'DejaVu Sans Condensed','DejaVu Sans','Liberation Sans',sans-serif;font-size:11.00px;line-height:16px;color:#000;font-weight:bold;letter-spacing:-0.099px;">1 556,00 €</span>
<span class="t" style="left:591.44px;top:318.00px;font-family:'DejaVu Sans Condensed','DejaVu Sans','Liberation Sans',sans-serif;font-size:11.00px;line-height:16px;color:#000;font-weight:bold;letter-spacing:-0.099px;">1 851,64 €</span>
<span class="t" style="left:691.60px;top:318.00px;font-family:'DejaVu Sans Condensed','DejaVu Sans','Liberation Sans',sans-serif;font-size:11.00px;line-height:16px;color:#000;font-weight:bold;letter-spacing:-0.099px;">9 336,01 €</span>
<span class="t" style="left:794.74px;top:318.00px;font-family:'DejaVu Sans Condensed','DejaVu Sans','Liberation Sans',sans-serif;font-size:11.00px;line-height:16px;color:#000;font-weight:bold;letter-spacing:-0.099px;">11 109,85 €</span>
<span class="t" style="left:55.82px;top:341.00px;font-family:'DejaVu Sans Condensed','DejaVu Sans','Liberation Sans',sans-serif;font-size:11.00px;line-height:16px;color:#000;letter-spacing:0.183px;">8</span>
<span class="t" style="left:67.08px;top:341.00px;font-family:'DejaVu Sans Condensed','DejaVu Sans','Liberation Sans',sans-serif;font-size:11.00px;line-height:16px;color:#000;letter-spacing:-0.092px;">FENSTER 1-FLüG. (DK LINKS)</span>
<span class="t" style="left:302.68px;top:341.00px;font-family:'DejaVu Sans Condensed','DejaVu Sans','Liberation Sans',sans-serif;font-size:11.00px;line-height:16px;color:#000;letter-spacing:-0.242px;">1000 x 1000</span>
<span class="t" style="left:369.48px;top:341.00px;font-family:'DejaVu Sans Condensed','DejaVu Sans','Liberation Sans',sans-serif;font-size:11.00px;line-height:16px;color:#000;letter-spacing:-0.338px;">5 Stück</span>
<span class="t" style="left:443.10px;top:341.00px;font-family:'DejaVu Sans Condensed','DejaVu Sans','Liberation Sans',sans-serif;font-size:11.00px;line-height:16px;color:#000;letter-spacing:-0.377px;">19</span>
<span class="t" style="left:498.53px;top:341.00px;font-family:'DejaVu Sans Condensed','DejaVu Sans','Liberation Sans',sans-serif;font-size:11.00px;line-height:16px;color:#000;font-weight:bold;letter-spacing:-0.099px;">823,11 €</span>
<span class="t" style="left:601.57px;top:341.00px;font-family:'DejaVu Sans Condensed','DejaVu Sans','Liberation Sans',sans-serif;font-size:11.00px;line-height:16px;color:#000;font-weight:bold;letter-spacing:-0.099px;">979,50 €</span>
<span class="t" style="left:691.60px;top:341.00px;font-family:'DejaVu Sans Condensed','DejaVu Sans','Liberation Sans',sans-serif;font-size:11.00px;line-height:16px;color:#000;font-weight:bold;letter-spacing:-0.099px;">4 115,56 €</span>
<span class="t" style="left:801.52px;top:341.00px;font-family:'DejaVu Sans Condensed','DejaVu Sans','Liberation Sans',sans-serif;font-size:11.00px;line-height:16px;color:#000;font-weight:bold;letter-spacing:-0.099px;">4 897,51 €</span>
<span class="t" style="left:55.82px;top:364.00px;font-family:'DejaVu Sans Condensed','DejaVu Sans','Liberation Sans',sans-serif;font-size:11.00px;line-height:16px;color:#000;letter-spacing:0.183px;">9</span>
<span class="t" style="left:67.08px;top:364.00px;font-family:'DejaVu Sans Condensed','DejaVu Sans','Liberation Sans',sans-serif;font-size:11.00px;line-height:16px;color:#000;letter-spacing:-0.092px;">FENSTER 1-FLüG. (DK LINKS)</span>
<span class="t" style="left:302.68px;top:364.00px;font-family:'DejaVu Sans Condensed','DejaVu Sans','Liberation Sans',sans-serif;font-size:11.00px;line-height:16px;color:#000;letter-spacing:-0.242px;">800 x 1000</span>
<span class="t" style="left:369.48px;top:364.00px;font-family:'DejaVu Sans Condensed','DejaVu Sans','Liberation Sans',sans-serif;font-size:11.00px;line-height:16px;color:#000;letter-spacing:-0.338px;">5 Stück</span>
<span class="t" style="left:443.10px;top:364.00px;font-family:'DejaVu Sans Condensed','DejaVu Sans','Liberation Sans',sans-serif;font-size:11.00px;line-height:16px;color:#000;letter-spacing:-0.377px;">19</span>
<span class="t" style="left:498.53px;top:364.00px;font-family:'DejaVu Sans Condensed','DejaVu Sans','Liberation Sans',sans-serif;font-size:11.00px;line-height:16px;color:#000;font-weight:bold;letter-spacing:-0.099px;">823,11 €</span>
<span class="t" style="left:601.57px;top:364.00px;font-family:'DejaVu Sans Condensed','DejaVu Sans','Liberation Sans',sans-serif;font-size:11.00px;line-height:16px;color:#000;font-weight:bold;letter-spacing:-0.099px;">979,50 €</span>
<span class="t" style="left:691.60px;top:364.00px;font-family:'DejaVu Sans Condensed','DejaVu Sans','Liberation Sans',sans-serif;font-size:11.00px;line-height:16px;color:#000;font-weight:bold;letter-spacing:-0.099px;">4 115,56 €</span>
<span class="t" style="left:801.52px;top:364.00px;font-family:'DejaVu Sans Condensed','DejaVu Sans','Liberation Sans',sans-serif;font-size:11.00px;line-height:16px;color:#000;font-weight:bold;letter-spacing:-0.099px;">4 897,51 €</span>
<span class="t" style="left:49.34px;top:387.00px;font-family:'DejaVu Sans Condensed','DejaVu Sans','Liberation Sans',sans-serif;font-size:11.00px;line-height:16px;color:#000;letter-spacing:0.183px;">10</span>
<span class="t" style="left:67.08px;top:387.00px;font-family:'DejaVu Sans Condensed','DejaVu Sans','Liberation Sans',sans-serif;font-size:11.00px;line-height:16px;color:#000;letter-spacing:-0.044px;">FENSTER 3-TEIL. (FEST + DK RECHTS + FEST)</span>
<span class="t" style="left:302.68px;top:387.00px;font-family:'DejaVu Sans Condensed','DejaVu Sans','Liberation Sans',sans-serif;font-size:11.00px;line-height:16px;color:#000;letter-spacing:-0.242px;">1480 x 1370</span>
<span class="t" style="left:369.48px;top:387.00px;font-family:'DejaVu Sans Condensed','DejaVu Sans','Liberation Sans',sans-serif;font-size:11.00px;line-height:16px;color:#000;letter-spacing:-0.338px;">4 Stück</span>
<span class="t" style="left:443.10px;top:387.00px;font-family:'DejaVu Sans Condensed','DejaVu Sans','Liberation Sans',sans-serif;font-size:11.00px;line-height:16px;color:#000;letter-spacing:-0.377px;">19</span>
<span class="t" style="left:488.40px;top:387.00px;font-family:'DejaVu Sans Condensed','DejaVu Sans','Liberation Sans',sans-serif;font-size:11.00px;line-height:16px;color:#000;font-weight:bold;letter-spacing:-0.099px;">1 556,00 €</span>
<span class="t" style="left:591.44px;top:387.00px;font-family:'DejaVu Sans Condensed','DejaVu Sans','Liberation Sans',sans-serif;font-size:11.00px;line-height:16px;color:#000;font-weight:bold;letter-spacing:-0.099px;">1 851,64 €</span>
<span class="t" style="left:691.60px;top:387.00px;font-family:'DejaVu Sans Condensed','DejaVu Sans','Liberation Sans',sans-serif;font-size:11.00px;line-height:16px;color:#000;font-weight:bold;letter-spacing:-0.099px;">6 224,00 €</span>
<span class="t" style="left:801.52px;top:387.00px;font-family:'DejaVu Sans Condensed','DejaVu Sans','Liberation Sans',sans-serif;font-size:11.00px;line-height:16px;color:#000;font-weight:bold;letter-spacing:-0.099px;">7 406,56 €</span>
<span class="t" style="left:49.34px;top:410.00px;font-family:'DejaVu Sans Condensed','DejaVu Sans','Liberation Sans',sans-serif;font-size:11.00px;line-height:16px;color:#000;letter-spacing:0.183px;">11</span>
<span class="t" style="left:67.08px;top:410.00px;font-family:'DejaVu Sans Condensed','DejaVu Sans','Liberation Sans',sans-serif;font-size:11.00px;line-height:16px;color:#000;letter-spacing:-0.044px;">FENSTER 3-TEIL. (FEST + DK RECHTS + FEST)</span>
<span class="t" style="left:302.68px;top:410.00px;font-family:'DejaVu Sans Condensed','DejaVu Sans','Liberation Sans',sans-serif;font-size:11.00px;line-height:16px;color:#000;letter-spacing:-0.242px;">1600 x 1500</span>
<span class="t" style="left:369.48px;top:410.00px;font-family:'DejaVu Sans Condensed','DejaVu Sans','Liberation Sans',sans-serif;font-size:11.00px;line-height:16px;color:#000;letter-spacing:-0.338px;">4 Stück</span>
<span class="t" style="left:443.10px;top:410.00px;font-family:'DejaVu Sans Condensed','DejaVu Sans','Liberation Sans',sans-serif;font-size:11.00px;line-height:16px;color:#000;letter-spacing:-0.377px;">19</span>
<span class="t" style="left:488.40px;top:410.00px;font-family:'DejaVu Sans Condensed','DejaVu Sans','Liberation Sans',sans-serif;font-size:11.00px;line-height:16px;color:#000;font-weight:bold;letter-spacing:-0.099px;">1 556,00 €</span>
<span class="t" style="left:591.44px;top:410.00px;font-family:'DejaVu Sans Condensed','DejaVu Sans','Liberation Sans',sans-serif;font-size:11.00px;line-height:16px;color:#000;font-weight:bold;letter-spacing:-0.099px;">1 851,64 €</span>
<span class="t" style="left:691.60px;top:410.00px;font-family:'DejaVu Sans Condensed','DejaVu Sans','Liberation Sans',sans-serif;font-size:11.00px;line-height:16px;color:#000;font-weight:bold;letter-spacing:-0.099px;">6 224,00 €</span>
<span class="t" style="left:801.52px;top:410.00px;font-family:'DejaVu Sans Condensed','DejaVu Sans','Liberation Sans',sans-serif;font-size:11.00px;line-height:16px;color:#000;font-weight:bold;letter-spacing:-0.099px;">7 406,56 €</span>
<span class="t" style="left:49.34px;top:433.00px;font-family:'DejaVu Sans Condensed','DejaVu Sans','Liberation Sans',sans-serif;font-size:11.00px;line-height:16px;color:#000;letter-spacing:0.183px;">12</span>
<span class="t" style="left:67.08px;top:433.00px;font-family:'DejaVu Sans Condensed','DejaVu Sans','Liberation Sans',sans-serif;font-size:11.00px;line-height:16px;color:#000;letter-spacing:-0.127px;">FENSTER 2-FLüG. (DK LINKS + DK RECHTS)</span>
<span class="t" style="left:302.68px;top:433.00px;font-family:'DejaVu Sans Condensed','DejaVu Sans','Liberation Sans',sans-serif;font-size:11.00px;line-height:16px;color:#000;letter-spacing:-0.242px;">1480 x 1370</span>
<span class="t" style="left:369.48px;top:433.00px;font-family:'DejaVu Sans Condensed','DejaVu Sans','Liberation Sans',sans-serif;font-size:11.00px;line-height:16px;color:#000;letter-spacing:-0.338px;">6 Stück</span>
<span class="t" style="left:443.10px;top:433.00px;font-family:'DejaVu Sans Condensed','DejaVu Sans','Liberation Sans',sans-serif;font-size:11.00px;line-height:16px;color:#000;letter-spacing:-0.377px;">19</span>
<span class="t" style="left:488.40px;top:433.00px;font-family:'DejaVu Sans Condensed','DejaVu Sans','Liberation Sans',sans-serif;font-size:11.00px;line-height:16px;color:#000;font-weight:bold;letter-spacing:-0.099px;">1 556,00 €</span>
<span class="t" style="left:591.44px;top:433.00px;font-family:'DejaVu Sans Condensed','DejaVu Sans','Liberation Sans',sans-serif;font-size:11.00px;line-height:16px;color:#000;font-weight:bold;letter-spacing:-0.099px;">1 851,64 €</span>
<span class="t" style="left:691.60px;top:433.00px;font-family:'DejaVu Sans Condensed','DejaVu Sans','Liberation Sans',sans-serif;font-size:11.00px;line-height:16px;color:#000;font-weight:bold;letter-spacing:-0.099px;">9 336,01 €</span>
<span class="t" style="left:794.74px;top:433.00px;font-family:'DejaVu Sans Condensed','DejaVu Sans','Liberation Sans',sans-serif;font-size:11.00px;line-height:16px;color:#000;font-weight:bold;letter-spacing:-0.099px;">11 109,85 €</span>
<span class="t" style="left:49.34px;top:456.00px;font-family:'DejaVu Sans Condensed','DejaVu Sans','Liberation Sans',sans-serif;font-size:11.00px;line-height:16px;color:#000;letter-spacing:0.183px;">13</span>
<span class="t" style="left:67.08px;top:456.00px;font-family:'DejaVu Sans Condensed','DejaVu Sans','Liberation Sans',sans-serif;font-size:11.00px;line-height:16px;color:#000;letter-spacing:-0.092px;">FENSTER 1-FLüG. (DK LINKS)</span>
<span class="t" style="left:302.68px;top:456.00px;font-family:'DejaVu Sans Condensed','DejaVu Sans','Liberation Sans',sans-serif;font-size:11.00px;line-height:16px;color:#000;letter-spacing:-0.242px;">1000 x 1000</span>
<span class="t" style="left:369.48px;top:456.00px;font-family:'DejaVu Sans Condensed','DejaVu Sans','Liberation Sans',sans-serif;font-size:11.00px;line-height:16px;color:#000;letter-spacing:-0.338px;">5 Stück</span>
<span class="t" style="left:443.10px;top:456.00px;font-family:'DejaVu Sans Condensed','DejaVu Sans','Liberation Sans',sans-serif;font-size:11.00px;line-height:16px;color:#000;letter-spacing:-0.377px;">19</span>
<span class="t" style="left:498.53px;top:456.00px;font-family:'DejaVu Sans Condensed','DejaVu Sans','Liberation Sans',sans-serif;font-size:11.00px;line-height:16px;color:#000;font-weight:bold;letter-spacing:-0.099px;">823,11 €</span>
<span class="t" style="left:601.57px;top:456.00px;font-family:'DejaVu Sans Condensed','DejaVu Sans','Liberation Sans',sans-serif;font-size:11.00px;line-height:16px;color:#000;font-weight:bold;letter-spacing:-0.099px;">979,50 €</span>
<span class="t" style="left:691.60px;top:456.00px;font-family:'DejaVu Sans Condensed','DejaVu Sans','Liberation Sans',sans-serif;font-size:11.00px;line-height:16px;color:#000;font-weight:bold;letter-spacing:-0.099px;">4 115,56 €</span>
<span class="t" style="left:801.52px;top:456.00px;font-family:'DejaVu Sans Condensed','DejaVu Sans','Liberation Sans',sans-serif;font-size:11.00px;line-height:16px;color:#000;font-weight:bold;letter-spacing:-0.099px;">4 897,51 €</span>
<span class="t" style="left:49.34px;top:479.00px;font-family:'DejaVu Sans Condensed','DejaVu Sans','Liberation Sans',sans-serif;font-size:11.00px;line-height:16px;color:#000;letter-spacing:0.183px;">14</span>
<span class="t" style="left:67.08px;top:479.00px;font-family:'DejaVu Sans Condensed','DejaVu Sans','Liberation Sans',sans-serif;font-size:11.00px;line-height:16px;color:#000;letter-spacing:0.018px;">FENSTER 2-TEIL. (FEST + D LINKS) 2-REIH.</span>
<span class="t" style="left:302.68px;top:479.00px;font-family:'DejaVu Sans Condensed','DejaVu Sans','Liberation Sans',sans-serif;font-size:11.00px;line-height:16px;color:#000;letter-spacing:-0.242px;">600 x 1420</span>
<span class="t" style="left:369.48px;top:479.00px;font-family:'DejaVu Sans Condensed','DejaVu Sans','Liberation Sans',sans-serif;font-size:11.00px;line-height:16px;color:#000;letter-spacing:-0.338px;">13 Stück</span>
<span class="t" style="left:443.10px;top:479.00px;font-family:'DejaVu Sans Condensed','DejaVu Sans','Liberation Sans',sans-serif;font-size:11.00px;line-height:16px;color:#000;letter-spacing:-0.377px;">19</span>
<span class="t" style="left:488.40px;top:479.00px;font-family:'DejaVu Sans Condensed','DejaVu Sans','Liberation Sans',sans-serif;font-size:11.00px;line-height:16px;color:#000;font-weight:bold;letter-spacing:-0.099px;">1 920,43 €</span>
<span class="t" style="left:591.44px;top:479.00px;font-family:'DejaVu Sans Condensed','DejaVu Sans','Liberation Sans',sans-serif;font-size:11.00px;line-height:16px;color:#000;font-weight:bold;letter-spacing:-0.099px;">2 285,31 €</span>
<span class="t" style="left:684.82px;top:479.00px;font-family:'DejaVu Sans Condensed','DejaVu Sans','Liberation Sans',sans-serif;font-size:11.00px;line-height:16px;color:#000;font-weight:bold;letter-spacing:-0.099px;">24 965,59 €</span>
<span class="t" style="left:794.74px;top:479.00px;font-family:'DejaVu Sans Condensed','DejaVu Sans','Liberation Sans',sans-serif;font-size:11.00px;line-height:16px;color:#000;font-weight:bold;letter-spacing:-0.099px;">29 709,05 €</span>
<span class="t" style="left:49.34px;top:502.00px;font-family:'DejaVu Sans Condensed','DejaVu Sans','Liberation Sans',sans-serif;font-size:11.00px;line-height:16px;color:#000;letter-spacing:0.183px;">15</span>
<span class="t" style="left:67.08px;top:502.00px;font-family:'DejaVu Sans Condensed','DejaVu Sans','Liberation Sans',sans-serif;font-size:11.00px;line-height:16px;color:#000;letter-spacing:-0.092px;">FENSTER 1-FLüG. (DK LINKS)</span>
<span class="t" style="left:302.68px;top:502.00px;font-family:'DejaVu Sans Condensed','DejaVu Sans','Liberation Sans',sans-serif;font-size:11.00px;line-height:16px;color:#000;letter-spacing:-0.242px;">1000 x 1000</span>
<span class="t" style="left:369.48px;top:502.00px;font-family:'DejaVu Sans Condensed','DejaVu Sans','Liberation Sans',sans-serif;font-size:11.00px;line-height:16px;color:#000;letter-spacing:-0.338px;">5 Stück</span>
<span class="t" style="left:443.10px;top:502.00px;font-family:'DejaVu Sans Condensed','DejaVu Sans','Liberation Sans',sans-serif;font-size:11.00px;line-height:16px;color:#000;letter-spacing:-0.377px;">19</span>
<span class="t" style="left:498.53px;top:502.00px;font-family:'DejaVu Sans Condensed','DejaVu Sans','Liberation Sans',sans-serif;font-size:11.00px;line-height:16px;color:#000;font-weight:bold;letter-spacing:-0.099px;">823,11 €</span>
<span class="t" style="left:601.57px;top:502.00px;font-family:'DejaVu Sans Condensed','DejaVu Sans','Liberation Sans',sans-serif;font-size:11.00px;line-height:16px;color:#000;font-weight:bold;letter-spacing:-0.099px;">979,50 €</span>
<span class="t" style="left:691.60px;top:502.00px;font-family:'DejaVu Sans Condensed','DejaVu Sans','Liberation Sans',sans-serif;font-size:11.00px;line-height:16px;color:#000;font-weight:bold;letter-spacing:-0.099px;">4 115,56 €</span>
<span class="t" style="left:801.52px;top:502.00px;font-family:'DejaVu Sans Condensed','DejaVu Sans','Liberation Sans',sans-serif;font-size:11.00px;line-height:16px;color:#000;font-weight:bold;letter-spacing:-0.099px;">4 897,51 €</span>
<span class="t" style="left:49.34px;top:525.00px;font-family:'DejaVu Sans Condensed','DejaVu Sans','Liberation Sans',sans-serif;font-size:11.00px;line-height:16px;color:#000;letter-spacing:0.183px;">16</span>
<span class="t" style="left:67.08px;top:525.00px;font-family:'DejaVu Sans Condensed','DejaVu Sans','Liberation Sans',sans-serif;font-size:11.00px;line-height:16px;color:#000;letter-spacing:-0.127px;">FENSTER 2-FLüG. (DK LINKS + DK RECHTS)</span>
<span class="t" style="left:302.68px;top:525.00px;font-family:'DejaVu Sans Condensed','DejaVu Sans','Liberation Sans',sans-serif;font-size:11.00px;line-height:16px;color:#000;letter-spacing:-0.242px;">1480 x 1370</span>
<span class="t" style="left:369.48px;top:525.00px;font-family:'DejaVu Sans Condensed','DejaVu Sans','Liberation Sans',sans-serif;font-size:11.00px;line-height:16px;color:#000;letter-spacing:-0.338px;">4 Stück</span>
<span class="t" style="left:443.10px;top:525.00px;font-family:'DejaVu Sans Condensed','DejaVu Sans','Liberation Sans',sans-serif;font-size:11.00px;line-height:16px;color:#000;letter-spacing:-0.377px;">19</span>
<span class="t" style="left:488.40px;top:525.00px;font-family:'DejaVu Sans Condensed','DejaVu Sans','Liberation Sans',sans-serif;font-size:11.00px;line-height:16px;color:#000;font-weight:bold;letter-spacing:-0.099px;">1 556,00 €</span>
<span class="t" style="left:591.44px;top:525.00px;font-family:'DejaVu Sans Condensed','DejaVu Sans','Liberation Sans',sans-serif;font-size:11.00px;line-height:16px;color:#000;font-weight:bold;letter-spacing:-0.099px;">1 851,64 €</span>
<span class="t" style="left:691.60px;top:525.00px;font-family:'DejaVu Sans Condensed','DejaVu Sans','Liberation Sans',sans-serif;font-size:11.00px;line-height:16px;color:#000;font-weight:bold;letter-spacing:-0.099px;">6 224,00 €</span>
<span class="t" style="left:801.52px;top:525.00px;font-family:'DejaVu Sans Condensed','DejaVu Sans','Liberation Sans',sans-serif;font-size:11.00px;line-height:16px;color:#000;font-weight:bold;letter-spacing:-0.099px;">7 406,56 €</span>
<span class="t" style="left:49.34px;top:548.00px;font-family:'DejaVu Sans Condensed','DejaVu Sans','Liberation Sans',sans-serif;font-size:11.00px;line-height:16px;color:#000;letter-spacing:0.183px;">17</span>
<span class="t" style="left:67.08px;top:548.00px;font-family:'DejaVu Sans Condensed','DejaVu Sans','Liberation Sans',sans-serif;font-size:11.00px;line-height:16px;color:#000;letter-spacing:-0.044px;">FENSTER 3-TEIL. (FEST + DK RECHTS + FEST)</span>
<span class="t" style="left:302.68px;top:548.00px;font-family:'DejaVu Sans Condensed','DejaVu Sans','Liberation Sans',sans-serif;font-size:11.00px;line-height:16px;color:#000;letter-spacing:-0.242px;">1400 x 1200</span>
<span class="t" style="left:369.48px;top:548.00px;font-family:'DejaVu Sans Condensed','DejaVu Sans','Liberation Sans',sans-serif;font-size:11.00px;line-height:16px;color:#000;letter-spacing:-0.338px;">4 Stück</span>
<span class="t" style="left:443.10px;top:548.00px;font-family:'DejaVu Sans Condensed','DejaVu Sans','Liberation Sans',sans-serif;font-size:11.00px;line-height:16px;color:#000;letter-spacing:-0.377px;">19</span>
<span class="t" style="left:488.40px;top:548.00px;font-family:'DejaVu Sans Condensed','DejaVu Sans','Liberation Sans',sans-serif;font-size:11.00px;line-height:16px;color:#000;font-weight:bold;letter-spacing:-0.099px;">1 556,00 €</span>
<span class="t" style="left:591.44px;top:548.00px;font-family:'DejaVu Sans Condensed','DejaVu Sans','Liberation Sans',sans-serif;font-size:11.00px;line-height:16px;color:#000;font-weight:bold;letter-spacing:-0.099px;">1 851,64 €</span>
<span class="t" style="left:691.60px;top:548.00px;font-family:'DejaVu Sans Condensed','DejaVu Sans','Liberation Sans',sans-serif;font-size:11.00px;line-height:16px;color:#000;font-weight:bold;letter-spacing:-0.099px;">6 224,00 €</span>
<span class="t" style="left:801.52px;top:548.00px;font-family:'DejaVu Sans Condensed','DejaVu Sans','Liberation Sans',sans-serif;font-size:11.00px;line-height:16px;color:#000;font-weight:bold;letter-spacing:-0.099px;">7 406,56 €</span>
<span class="t" style="left:49.34px;top:571.00px;font-family:'DejaVu Sans Condensed','DejaVu Sans','Liberation Sans',sans-serif;font-size:11.00px;line-height:16px;color:#000;letter-spacing:0.183px;">18</span>
<span class="t" style="left:67.08px;top:571.00px;font-family:'DejaVu Sans Condensed','DejaVu Sans','Liberation Sans',sans-serif;font-size:11.00px;line-height:16px;color:#000;letter-spacing:0.018px;">FENSTER 2-TEIL. (FEST + D LINKS) 2-REIH.</span>
<span class="t" style="left:302.68px;top:571.00px;font-family:'DejaVu Sans Condensed','DejaVu Sans','Liberation Sans',sans-serif;font-size:11.00px;line-height:16px;color:#000;letter-spacing:-0.242px;">600 x 1420</span>
<span class="t" style="left:369.48px;top:571.00px;font-family:'DejaVu Sans Condensed','DejaVu Sans','Liberation Sans',sans-serif;font-size:11.00px;line-height:16px;color:#000;letter-spacing:-0.338px;">13 Stück</span>
<span class="t" style="left:443.10px;top:571.00px;font-family:'DejaVu Sans Condensed','DejaVu Sans','Liberation Sans',sans-serif;font-size:11.00px;line-height:16px;color:#000;letter-spacing:-0.377px;">19</span>
<span class="t" style="left:488.40px;top:571.00px;font-family:'DejaVu Sans Condensed','DejaVu Sans','Liberation Sans',sans-serif;font-size:11.00px;line-height:16px;color:#000;font-weight:bold;letter-spacing:-0.099px;">1 920,43 €</span>
<span class="t" style="left:591.44px;top:571.00px;font-family:'DejaVu Sans Condensed','DejaVu Sans','Liberation Sans',sans-serif;font-size:11.00px;line-height:16px;color:#000;font-weight:bold;letter-spacing:-0.099px;">2 285,31 €</span>
<span class="t" style="left:684.82px;top:571.00px;font-family:'DejaVu Sans Condensed','DejaVu Sans','Liberation Sans',sans-serif;font-size:11.00px;line-height:16px;color:#000;font-weight:bold;letter-spacing:-0.099px;">24 965,59 €</span>
<span class="t" style="left:794.74px;top:571.00px;font-family:'DejaVu Sans Condensed','DejaVu Sans','Liberation Sans',sans-serif;font-size:11.00px;line-height:16px;color:#000;font-weight:bold;letter-spacing:-0.099px;">29 709,05 €</span>
<span class="t" style="left:49.34px;top:594.00px;font-family:'DejaVu Sans Condensed','DejaVu Sans','Liberation Sans',sans-serif;font-size:11.00px;line-height:16px;color:#000;letter-spacing:0.183px;">19</span>
<span class="t" style="left:67.08px;top:594.00px;font-family:'DejaVu Sans Condensed','DejaVu Sans','Liberation Sans',sans-serif;font-size:11.00px;line-height:16px;color:#000;letter-spacing:-0.092px;">FENSTER 1-FLüG. (DK LINKS)</span>
<span class="t" style="left:302.68px;top:594.00px;font-family:'DejaVu Sans Condensed','DejaVu Sans','Liberation Sans',sans-serif;font-size:11.00px;line-height:16px;color:#000;letter-spacing:-0.242px;">1000 x 1000</span>
<span class="t" style="left:369.48px;top:594.00px;font-family:'DejaVu Sans Condensed','DejaVu Sans','Liberation Sans',sans-serif;font-size:11.00px;line-height:16px;color:#000;letter-spacing:-0.338px;">5 Stück</span>
<span class="t" style="left:443.10px;top:594.00px;font-family:'DejaVu Sans Condensed','DejaVu Sans','Liberation Sans',sans-serif;font-size:11.00px;line-height:16px;color:#000;letter-spacing:-0.377px;">19</span>
<span class="t" style="left:498.53px;top:594.00px;font-family:'DejaVu Sans Condensed','DejaVu Sans','Liberation Sans',sans-serif;font-size:11.00px;line-height:16px;color:#000;font-weight:bold;letter-spacing:-0.099px;">823,11 €</span>
<span class="t" style="left:601.57px;top:594.00px;font-family:'DejaVu Sans Condensed','DejaVu Sans','Liberation Sans',sans-serif;font-size:11.00px;line-height:16px;color:#000;font-weight:bold;letter-spacing:-0.099px;">979,50 €</span>
<span class="t" style="left:691.60px;top:594.00px;font-family:'DejaVu Sans Condensed','DejaVu Sans','Liberation Sans',sans-serif;font-size:11.00px;line-height:16px;color:#000;font-weight:bold;letter-spacing:-0.099px;">4 115,56 €</span>
<span class="t" style="left:801.52px;top:594.00px;font-family:'DejaVu Sans Condensed','DejaVu Sans','Liberation Sans',sans-serif;font-size:11.00px;line-height:16px;color:#000;font-weight:bold;letter-spacing:-0.099px;">4 897,51 €</span>
<span class="t" style="left:49.34px;top:617.00px;font-family:'DejaVu Sans Condensed','DejaVu Sans','Liberation Sans',sans-serif;font-size:11.00px;line-height:16px;color:#000;letter-spacing:0.183px;">20</span>
<span class="t" style="left:67.08px;top:617.00px;font-family:'DejaVu Sans Condensed','DejaVu Sans','Liberation Sans',sans-serif;font-size:11.00px;line-height:16px;color:#000;letter-spacing:-0.127px;">FENSTER 2-FLüG. (DK LINKS + DK RECHTS)</span>
<span class="t" style="left:302.68px;top:617.00px;font-family:'DejaVu Sans Condensed','DejaVu Sans','Liberation Sans',sans-serif;font-size:11.00px;line-height:16px;color:#000;letter-spacing:-0.242px;">1480 x 1370</span>
<span class="t" style="left:369.48px;top:617.00px;font-family:'DejaVu Sans Condensed','DejaVu Sans','Liberation Sans',sans-serif;font-size:11.00px;line-height:16px;color:#000;letter-spacing:-0.338px;">4 Stück</span>
<span class="t" style="left:443.10px;top:617.00px;font-family:'DejaVu Sans Condensed','DejaVu Sans','Liberation Sans',sans-serif;font-size:11.00px;line-height:16px;color:#000;letter-spacing:-0.377px;">19</span>
<span class="t" style="left:488.40px;top:617.00px;font-family:'DejaVu Sans Condensed','DejaVu Sans','Liberation Sans',sans-serif;font-size:11.00px;line-height:16px;color:#000;font-weight:bold;letter-spacing:-0.099px;">1 556,00 €</span>
<span class="t" style="left:591.44px;top:617.00px;font-family:'DejaVu Sans Condensed','DejaVu Sans','Liberation Sans',sans-serif;font-size:11.00px;line-height:16px;color:#000;font-weight:bold;letter-spacing:-0.099px;">1 851,64 €</span>
<span class="t" style="left:691.60px;top:617.00px;font-family:'DejaVu Sans Condensed','DejaVu Sans','Liberation Sans',sans-serif;font-size:11.00px;line-height:16px;color:#000;font-weight:bold;letter-spacing:-0.099px;">6 224,00 €</span>
<span class="t" style="left:801.52px;top:617.00px;font-family:'DejaVu Sans Condensed','DejaVu Sans','Liberation Sans',sans-serif;font-size:11.00px;line-height:16px;color:#000;font-weight:bold;letter-spacing:-0.099px;">7 406,56 €</span>
<span class="t" style="left:49.34px;top:640.00px;font-family:'DejaVu Sans Condensed','DejaVu Sans','Liberation Sans',sans-serif;font-size:11.00px;line-height:16px;color:#000;letter-spacing:0.183px;">21</span>
<span class="t" style="left:67.08px;top:640.00px;font-family:'DejaVu Sans Condensed','DejaVu Sans','Liberation Sans',sans-serif;font-size:11.00px;line-height:16px;color:#000;letter-spacing:-0.044px;">FENSTER 3-TEIL. (FEST + DK RECHTS + FEST)</span>
<span class="t" style="left:302.68px;top:640.00px;font-family:'DejaVu Sans Condensed','DejaVu Sans','Liberation Sans',sans-serif;font-size:11.00px;line-height:16px;color:#000;letter-spacing:-0.242px;">1480 x 1370</span>
<span class="t" style="left:369.48px;top:640.00px;font-family:'DejaVu Sans Condensed','DejaVu Sans','Liberation Sans',sans-serif;font-size:11.00px;line-height:16px;color:#000;letter-spacing:-0.338px;">4 Stück</span>
<span class="t" style="left:443.10px;top:640.00px;font-family:'DejaVu Sans Condensed','DejaVu Sans','Liberation Sans',sans-serif;font-size:11.00px;line-height:16px;color:#000;letter-spacing:-0.377px;">19</span>
<span class="t" style="left:488.40px;top:640.00px;font-family:'DejaVu Sans Condensed','DejaVu Sans','Liberation Sans',sans-serif;font-size:11.00px;line-height:16px;color:#000;font-weight:bold;letter-spacing:-0.099px;">1 556,00 €</span>
<span class="t" style="left:591.44px;top:640.00px;font-family:'DejaVu Sans Condensed','DejaVu Sans','Liberation Sans',sans-serif;font-size:11.00px;line-height:16px;color:#000;font-weight:bold;letter-spacing:-0.099px;">1 851,64 €</span>
<span class="t" style="left:691.60px;top:640.00px;font-family:'DejaVu Sans Condensed','DejaVu Sans','Liberation Sans',sans-serif;font-size:11.00px;line-height:16px;color:#000;font-weight:bold;letter-spacing:-0.099px;">6 224,00 €</span>
<span class="t" style="left:801.52px;top:640.00px;font-family:'DejaVu Sans Condensed','DejaVu Sans','Liberation Sans',sans-serif;font-size:11.00px;line-height:16px;color:#000;font-weight:bold;letter-spacing:-0.099px;">7 406,56 €</span>
<span class="t" style="left:49.34px;top:663.00px;font-family:'DejaVu Sans Condensed','DejaVu Sans','Liberation Sans',sans-serif;font-size:11.00px;line-height:16px;color:#000;letter-spacing:0.183px;">22</span>
<span class="t" style="left:67.08px;top:663.00px;font-family:'DejaVu Sans Condensed','DejaVu Sans','Liberation Sans',sans-serif;font-size:11.00px;line-height:16px;color:#000;letter-spacing:-0.092px;">FENSTER 1-FLüG. (DK LINKS)</span>
<span class="t" style="left:302.68px;top:663.00px;font-family:'DejaVu Sans Condensed','DejaVu Sans','Liberation Sans',sans-serif;font-size:11.00px;line-height:16px;color:#000;letter-spacing:-0.242px;">1000 x 1000</span>
<span class="t" style="left:369.48px;top:663.00px;font-family:'DejaVu Sans Condensed','DejaVu Sans','Liberation Sans',sans-serif;font-size:11.00px;line-height:16px;color:#000;letter-spacing:-0.338px;">5 Stück</span>
<span class="t" style="left:443.10px;top:663.00px;font-family:'DejaVu Sans Condensed','DejaVu Sans','Liberation Sans',sans-serif;font-size:11.00px;line-height:16px;color:#000;letter-spacing:-0.377px;">19</span>
<span class="t" style="left:498.53px;top:663.00px;font-family:'DejaVu Sans Condensed','DejaVu Sans','Liberation Sans',sans-serif;font-size:11.00px;line-height:16px;color:#000;font-weight:bold;letter-spacing:-0.099px;">823,11 €</span>
<span class="t" style="left:601.57px;top:663.00px;font-family:'DejaVu Sans Condensed','DejaVu Sans','Liberation Sans',sans-serif;font-size:11.00px;line-height:16px;color:#000;font-weight:bold;letter-spacing:-0.099px;">979,50 €</span>
<span class="t" style="left:691.60px;top:663.00px;font-family:'DejaVu Sans Condensed','DejaVu Sans','Liberation Sans',sans-serif;font-size:11.00px;line-height:16px;color:#000;font-weight:bold;letter-spacing:-0.099px;">4 115,56 €</span>
<span class="t" style="left:801.52px;top:663.00px;font-family:'DejaVu Sans Condensed','DejaVu Sans','Liberation Sans',sans-serif;font-size:11.00px;line-height:16px;color:#000;font-weight:bold;letter-spacing:-0.099px;">4 897,51 €</span>
<span class="t" style="left:49.34px;top:686.00px;font-family:'DejaVu Sans Condensed','DejaVu Sans','Liberation Sans',sans-serif;font-size:11.00px;line-height:16px;color:#000;letter-spacing:0.183px;">23</span>
<span class="t" style="left:67.08px;top:686.00px;font-family:'DejaVu Sans Condensed','DejaVu Sans','Liberation Sans',sans-serif;font-size:11.00px;line-height:16px;color:#000;letter-spacing:-0.092px;">FENSTER 1-FLüG. (DK LINKS)</span>
<span class="t" style="left:302.68px;top:686.00px;font-family:'DejaVu Sans Condensed','DejaVu Sans','Liberation Sans',sans-serif;font-size:11.00px;line-height:16px;color:#000;letter-spacing:-0.242px;">1000 x 1000</span>
<span class="t" style="left:369.48px;top:686.00px;font-family:'DejaVu Sans Condensed','DejaVu Sans','Liberation Sans',sans-serif;font-size:11.00px;line-height:16px;color:#000;letter-spacing:-0.338px;">5 Stück</span>
<span class="t" style="left:443.10px;top:686.00px;font-family:'DejaVu Sans Condensed','DejaVu Sans','Liberation Sans',sans-serif;font-size:11.00px;line-height:16px;color:#000;letter-spacing:-0.377px;">19</span>
<span class="t" style="left:498.53px;top:686.00px;font-family:'DejaVu Sans Condensed','DejaVu Sans','Liberation Sans',sans-serif;font-size:11.00px;line-height:16px;color:#000;font-weight:bold;letter-spacing:-0.099px;">823,11 €</span>
<span class="t" style="left:601.57px;top:686.00px;font-family:'DejaVu Sans Condensed','DejaVu Sans','Liberation Sans',sans-serif;font-size:11.00px;line-height:16px;color:#000;font-weight:bold;letter-spacing:-0.099px;">979,50 €</span>
<span class="t" style="left:691.60px;top:686.00px;font-family:'DejaVu Sans Condensed','DejaVu Sans','Liberation Sans',sans-serif;font-size:11.00px;line-height:16px;color:#000;font-weight:bold;letter-spacing:-0.099px;">4 115,56 €</span>
<span class="t" style="left:801.52px;top:686.00px;font-family:'DejaVu Sans Condensed','DejaVu Sans','Liberation Sans',sans-serif;font-size:11.00px;line-height:16px;color:#000;font-weight:bold;letter-spacing:-0.099px;">4 897,51 €</span>
<span class="t" style="left:49.34px;top:709.00px;font-family:'DejaVu Sans Condensed','DejaVu Sans','Liberation Sans',sans-serif;font-size:11.00px;line-height:16px;color:#000;letter-spacing:0.183px;">24</span>
<span class="t" style="left:67.08px;top:709.00px;font-family:'DejaVu Sans Condensed','DejaVu Sans','Liberation Sans',sans-serif;font-size:11.00px;line-height:16px;color:#000;letter-spacing:-0.044px;">FENSTER 3-TEIL. (FEST + DK RECHTS + FEST)</span>
<span class="t" style="left:302.68px;top:709.00px;font-family:'DejaVu Sans Condensed','DejaVu Sans','Liberation Sans',sans-serif;font-size:11.00px;line-height:16px;color:#000;letter-spacing:-0.242px;">1480 x 1370</span>
<span class="t" style="left:369.48px;top:709.00px;font-family:'DejaVu Sans Condensed','DejaVu Sans','Liberation Sans',sans-serif;font-size:11.00px;line-height:16px;color:#000;letter-spacing:-0.338px;">4 Stück</span>
<span class="t" style="left:443.10px;top:709.00px;font-family:'DejaVu Sans Condensed','DejaVu Sans','Liberation Sans',sans-serif;font-size:11.00px;line-height:16px;color:#000;letter-spacing:-0.377px;">19</span>
<span class="t" style="left:488.40px;top:709.00px;font-family:'DejaVu Sans Condensed','DejaVu Sans','Liberation Sans',sans-serif;font-size:11.00px;line-height:16px;color:#000;font-weight:bold;letter-spacing:-0.099px;">1 556,00 €</span>
<span class="t" style="left:591.44px;top:709.00px;font-family:'DejaVu Sans Condensed','DejaVu Sans','Liberation Sans',sans-serif;font-size:11.00px;line-height:16px;color:#000;font-weight:bold;letter-spacing:-0.099px;">1 851,64 €</span>
<span class="t" style="left:691.60px;top:709.00px;font-family:'DejaVu Sans Condensed','DejaVu Sans','Liberation Sans',sans-serif;font-size:11.00px;line-height:16px;color:#000;font-weight:bold;letter-spacing:-0.099px;">6 224,00 €</span>
<span class="t" style="left:801.52px;top:709.00px;font-family:'DejaVu Sans Condensed','DejaVu Sans','Liberation Sans',sans-serif;font-size:11.00px;line-height:16px;color:#000;font-weight:bold;letter-spacing:-0.099px;">7 406,56 €</span>
<span class="t" style="left:49.34px;top:732.00px;font-family:'DejaVu Sans Condensed','DejaVu Sans','Liberation Sans',sans-serif;font-size:11.00px;line-height:16px;color:#000;letter-spacing:0.183px;">25</span>
<span class="t" style="left:67.08px;top:732.00px;font-family:'DejaVu Sans Condensed','DejaVu Sans','Liberation Sans',sans-serif;font-size:11.00px;line-height:16px;color:#000;letter-spacing:-0.092px;">FENSTER 1-FLüG. (DK LINKS)</span>
<span class="t" style="left:302.68px;top:732.00px;font-family:'DejaVu Sans Condensed','DejaVu Sans','Liberation Sans',sans-serif;font-size:11.00px;line-height:16px;color:#000;letter-spacing:-0.242px;">1000 x 1000</span>
<span class="t" style="left:369.48px;top:732.00px;font-family:'DejaVu Sans Condensed','DejaVu Sans','Liberation Sans',sans-serif;font-size:11.00px;line-height:16px;color:#000;letter-spacing:-0.338px;">5 Stück</span>
<span class="t" style="left:443.10px;top:732.00px;font-family:'DejaVu Sans Condensed','DejaVu Sans','Liberation Sans',sans-serif;font-size:11.00px;line-height:16px;color:#000;letter-spacing:-0.377px;">19</span>
<span class="t" style="left:498.53px;top:732.00px;font-family:'DejaVu Sans Condensed','DejaVu Sans','Liberation Sans',sans-serif;font-size:11.00px;line-height:16px;color:#000;font-weight:bold;letter-spacing:-0.099px;">823,11 €</span>
<span class="t" style="left:601.57px;top:732.00px;font-family:'DejaVu Sans Condensed','DejaVu Sans','Liberation Sans',sans-serif;font-size:11.00px;line-height:16px;color:#000;font-weight:bold;letter-spacing:-0.099px;">979,50 €</span>
<span class="t" style="left:691.60px;top:732.00px;font-family:'DejaVu Sans Condensed','DejaVu Sans','Liberation Sans',sans-serif;font-size:11.00px;line-height:16px;color:#000;font-weight:bold;letter-spacing:-0.099px;">4 115,56 €</span>
<span class="t" style="left:801.52px;top:732.00px;font-family:'DejaVu Sans Condensed','DejaVu Sans','Liberation Sans',sans-serif;font-size:11.00px;line-height:16px;color:#000;font-weight:bold;letter-spacing:-0.099px;">4 897,51 €</span>
<span class="t" style="left:49.34px;top:755.00px;font-family:'DejaVu Sans Condensed','DejaVu Sans','Liberation Sans',sans-serif;font-size:11.00px;line-height:16px;color:#000;letter-spacing:0.183px;">26</span>
<span class="t" style="left:67.08px;top:755.00px;font-family:'DejaVu Sans Condensed','DejaVu Sans','Liberation Sans',sans-serif;font-size:11.00px;line-height:16px;color:#000;letter-spacing:-0.092px;">FENSTER 1-FLüG. (DK LINKS)</span>
<span class="t" style="left:302.68px;top:755.00px;font-family:'DejaVu Sans Condensed','DejaVu Sans','Liberation Sans',sans-serif;font-size:11.00px;line-height:16px;color:#000;letter-spacing:-0.242px;">1000 x 1000</span>
<span class="t" style="left:369.48px;top:755.00px;font-family:'DejaVu Sans Condensed','DejaVu Sans','Liberation Sans',sans-serif;font-size:11.00px;line-height:16px;color:#000;letter-spacing:-0.338px;">5 Stück</span>
<span class="t" style="left:443.10px;top:755.00px;font-family:'DejaVu Sans Condensed','DejaVu Sans','Liberation Sans',sans-serif;font-size:11.00px;line-height:16px;color:#000;letter-spacing:-0.377px;">19</span>
<span class="t" style="left:498.53px;top:755.00px;font-family:'DejaVu Sans Condensed','DejaVu Sans','Liberation Sans',sans-serif;font-size:11.00px;line-height:16px;color:#000;font-weight:bold;letter-spacing:-0.099px;">823,11 €</span>
<span class="t" style="left:601.57px;top:755.00px;font-family:'DejaVu Sans Condensed','DejaVu Sans','Liberation Sans',sans-serif;font-size:11.00px;line-height:16px;color:#000;font-weight:bold;letter-spacing:-0.099px;">979,50 €</span>
<span class="t" style="left:691.60px;top:755.00px;font-family:'DejaVu Sans Condensed','DejaVu Sans','Liberation Sans',sans-serif;font-size:11.00px;line-height:16px;color:#000;font-weight:bold;letter-spacing:-0.099px;">4 115,56 €</span>
<span class="t" style="left:801.52px;top:755.00px;font-family:'DejaVu Sans Condensed','DejaVu Sans','Liberation Sans',sans-serif;font-size:11.00px;line-height:16px;color:#000;font-weight:bold;letter-spacing:-0.099px;">4 897,51 €</span>
<div style="left:907.00px;top:149.00px;width:283.00px;height:671.40px;background:#fff;"></div>
<span class="t" style="left:906.68px;top:401.00px;font-family:'DejaVu Sans Condensed','DejaVu Sans','Liberation Sans',sans-serif;font-size:11.00px;line-height:16px;color:#000;letter-spacing:-0.086px;">Innenansicht</span>
<span class="t" style="left:1133.04px;top:399.00px;font-family:'DejaVu Sans Condensed','DejaVu Sans','Liberation Sans',sans-serif;font-size:11.00px;line-height:16px;color:#000;letter-spacing:0.200px;">Kunststoff</span>
<div style="left:907.00px;top:420.00px;width:282.00px;height:1.00px;background:#A0A0A0;"></div>
<div style="left:1172.50px;top:422.00px;width:16.50px;height:325.00px;background:#F0F0F0;"></div>
<div style="left:1179.80px;top:439.00px;width:2.40px;height:16.80px;background:#868686;border-radius:1px;"></div>
<div style="left:907.00px;top:747.00px;width:283.00px;height:6.40px;background:#F0F0F0;"></div>
<div style="left:907.00px;top:422.30px;width:103.60px;height:17.50px;background:linear-gradient(#3B9DFB,#1382EC 50%,#0A74DC);"></div>
<div style="left:907.00px;top:440.00px;width:264.00px;height:1.00px;background:#EFEFEF;"></div>
<span class="t" style="left:908.28px;top:424.00px;font-family:'DejaVu Sans Condensed','DejaVu Sans','Liberation Sans',sans-serif;font-size:11.00px;line-height:16px;color:#fff;letter-spacing:-0.258px;">System</span>
<div style="left:1012.20px;top:422.60px;width:158.80px;height:17.60px;overflow:hidden"><span class="t" style="left:1.28px;top:1.40px;font-family:'DejaVu Sans Condensed','DejaVu Sans','Liberation Sans',sans-serif;font-size:11.00px;line-height:16px;color:#000;letter-spacing:-0.360px;">Aluminium Fenster</span></div>
<div style="left:907.00px;top:459.00px;width:264.00px;height:1.00px;background:#EFEFEF;"></div>
<span class="t" style="left:908.28px;top:443.00px;font-family:'DejaVu Sans Condensed','DejaVu Sans','Liberation Sans',sans-serif;font-size:11.00px;line-height:16px;color:#000;letter-spacing:0.037px;">Fenstertyp</span>
<div style="left:1012.20px;top:441.60px;width:158.80px;height:17.60px;overflow:hidden"><span class="t" style="left:1.28px;top:1.40px;font-family:'DejaVu Sans Condensed','DejaVu Sans','Liberation Sans',sans-serif;font-size:11.00px;line-height:16px;color:#000;letter-spacing:-0.127px;">FENSTER 2-FLüG. (DK LINKS + DK RECHTS)</span></div>
<div style="left:907.00px;top:478.00px;width:264.00px;height:1.00px;background:#EFEFEF;"></div>
<span class="t" style="left:908.28px;top:462.00px;font-family:'DejaVu Sans Condensed','DejaVu Sans','Liberation Sans',sans-serif;font-size:11.00px;line-height:16px;color:#000;letter-spacing:-0.214px;">Scheibe A</span>
<div style="left:1012.20px;top:460.60px;width:158.80px;height:17.60px;overflow:hidden"><span class="t" style="left:1.28px;top:1.40px;font-family:'DejaVu Sans Condensed','DejaVu Sans','Liberation Sans',sans-serif;font-size:11.00px;line-height:16px;color:#000;letter-spacing:0.002px;">4TPS/18TGI/4/18TGI/4TPS U=0,5</span></div>
<div style="left:907.00px;top:497.00px;width:264.00px;height:1.00px;background:#EFEFEF;"></div>
<span class="t" style="left:908.28px;top:481.00px;font-family:'DejaVu Sans Condensed','DejaVu Sans','Liberation Sans',sans-serif;font-size:11.00px;line-height:16px;color:#000;letter-spacing:-0.271px;">Scheibe B</span>
<div style="left:1012.20px;top:479.60px;width:158.80px;height:17.60px;overflow:hidden"><span class="t" style="left:1.28px;top:1.40px;font-family:'DejaVu Sans Condensed','DejaVu Sans','Liberation Sans',sans-serif;font-size:11.00px;line-height:16px;color:#000;letter-spacing:0.002px;">4TPS/18TGI/4/18TGI/4TPS U=0,5</span></div>
<div style="left:907.00px;top:516.00px;width:264.00px;height:1.00px;background:#EFEFEF;"></div>
<span class="t" style="left:908.28px;top:500.00px;font-family:'DejaVu Sans Condensed','DejaVu Sans','Liberation Sans',sans-serif;font-size:11.00px;line-height:16px;color:#000;letter-spacing:0.207px;">Farbe</span>
<div style="left:1012.20px;top:498.60px;width:158.80px;height:17.60px;overflow:hidden"><span class="t" style="left:1.28px;top:1.40px;font-family:'DejaVu Sans Condensed','DejaVu Sans','Liberation Sans',sans-serif;font-size:11.00px;line-height:16px;color:#000;letter-spacing:0.319px;">WEIß</span></div>
<div style="left:907.00px;top:535.00px;width:264.00px;height:1.00px;background:#EFEFEF;"></div>
<span class="t" style="left:908.28px;top:519.00px;font-family:'DejaVu Sans Condensed','DejaVu Sans','Liberation Sans',sans-serif;font-size:11.00px;line-height:16px;color:#000;letter-spacing:-0.327px;">Beschlag</span>
<div style="left:1012.20px;top:517.60px;width:158.80px;height:17.60px;overflow:hidden"><span class="t" style="left:1.28px;top:1.40px;font-family:'DejaVu Sans Condensed','DejaVu Sans','Liberation Sans',sans-serif;font-size:11.00px;line-height:16px;color:#000;letter-spacing:0.017px;">WINKHAUS</span></div>
<div style="left:907.00px;top:554.00px;width:264.00px;height:1.00px;background:#EFEFEF;"></div>
<span class="t" style="left:908.28px;top:538.00px;font-family:'DejaVu Sans Condensed','DejaVu Sans','Liberation Sans',sans-serif;font-size:11.00px;line-height:16px;color:#000;letter-spacing:-0.253px;">Sicherheitssytem</span>
<div style="left:1012.20px;top:536.60px;width:158.80px;height:17.60px;overflow:hidden"><span class="t" style="left:1.28px;top:1.40px;font-family:'DejaVu Sans Condensed','DejaVu Sans','Liberation Sans',sans-serif;font-size:11.00px;line-height:16px;color:#000;letter-spacing:-0.085px;">WK2 (zum Flügel  DK) inkl. Griff mit Schlüssel</span></div>
<div style="left:907.00px;top:573.00px;width:264.00px;height:1.00px;background:#EFEFEF;"></div>
<span class="t" style="left:908.28px;top:557.00px;font-family:'DejaVu Sans Condensed','DejaVu Sans','Liberation Sans',sans-serif;font-size:11.00px;line-height:16px;color:#000;letter-spacing:-0.320px;">Dichtung</span>
<div style="left:1012.20px;top:555.60px;width:158.80px;height:17.60px;overflow:hidden"><span class="t" style="left:1.28px;top:1.40px;font-family:'DejaVu Sans Condensed','DejaVu Sans','Liberation Sans',sans-serif;font-size:11.00px;line-height:16px;color:#000;letter-spacing:0.029px;">GRAU</span></div>
<div style="left:907.00px;top:592.00px;width:264.00px;height:1.00px;background:#EFEFEF;"></div>
<span class="t" style="left:908.28px;top:576.00px;font-family:'DejaVu Sans Condensed','DejaVu Sans','Liberation Sans',sans-serif;font-size:11.00px;line-height:16px;color:#000;letter-spacing:0.186px;">Griff</span>
<div style="left:1012.20px;top:574.60px;width:158.80px;height:17.60px;overflow:hidden"><span class="t" style="left:1.28px;top:1.40px;font-family:'DejaVu Sans Condensed','DejaVu Sans','Liberation Sans',sans-serif;font-size:11.00px;line-height:16px;color:#000;letter-spacing:0.109px;">ALUMINIUM WEIß</span></div>
<div style="left:907.00px;top:611.00px;width:264.00px;height:1.00px;background:#EFEFEF;"></div>
<span class="t" style="left:908.28px;top:595.00px;font-family:'DejaVu Sans Condensed','DejaVu Sans','Liberation Sans',sans-serif;font-size:11.00px;line-height:16px;color:#000;letter-spacing:0.011px;">Fenster Sperre</span>
<div style="left:1012.20px;top:593.60px;width:158.80px;height:17.60px;overflow:hidden"><span class="t" style="left:1.28px;top:1.40px;font-family:'DejaVu Sans Condensed','DejaVu Sans','Liberation Sans',sans-serif;font-size:11.00px;line-height:16px;color:#000;letter-spacing:-0.182px;">FEHLBEDIENUNGSSPERRE</span></div>
<div style="left:907.00px;top:630.00px;width:264.00px;height:1.00px;background:#EFEFEF;"></div>
<span class="t" style="left:908.28px;top:614.00px;font-family:'DejaVu Sans Condensed','DejaVu Sans','Liberation Sans',sans-serif;font-size:11.00px;line-height:16px;color:#000;letter-spacing:-0.095px;">Höhe der Griffe</span>
<div style="left:1012.20px;top:612.60px;width:158.80px;height:17.60px;overflow:hidden"><span class="t" style="left:1.28px;top:1.40px;font-family:'DejaVu Sans Condensed','DejaVu Sans','Liberation Sans',sans-serif;font-size:11.00px;line-height:16px;color:#000;letter-spacing:-0.077px;">Standard</span></div>
<div style="left:907.00px;top:649.00px;width:264.00px;height:1.00px;background:#EFEFEF;"></div>
<span class="t" style="left:908.28px;top:633.00px;font-family:'DejaVu Sans Condensed','DejaVu Sans','Liberation Sans',sans-serif;font-size:11.00px;line-height:16px;color:#000;letter-spacing:-0.214px;">Dreh-Kipp funktion</span>
<div style="left:1012.20px;top:631.60px;width:158.80px;height:17.60px;overflow:hidden"><span class="t" style="left:1.28px;top:1.40px;font-family:'DejaVu Sans Condensed','DejaVu Sans','Liberation Sans',sans-serif;font-size:11.00px;line-height:16px;color:#000;letter-spacing:-0.346px;">Dreh-Kipp funktion bis 1800mm Höhe</span></div>
<div style="left:907.00px;top:668.00px;width:264.00px;height:1.00px;background:#EFEFEF;"></div>
<span class="t" style="left:908.28px;top:652.00px;font-family:'DejaVu Sans Condensed','DejaVu Sans','Liberation Sans',sans-serif;font-size:11.00px;line-height:16px;color:#000;letter-spacing:-0.111px;">Warme Kante</span>
<div style="left:1012.20px;top:650.60px;width:158.80px;height:17.60px;overflow:hidden"><span class="t" style="left:1.28px;top:1.40px;font-family:'DejaVu Sans Condensed','DejaVu Sans','Liberation Sans',sans-serif;font-size:11.00px;line-height:16px;color:#000;letter-spacing:-0.018px;">KUNSTSTOFF GRAU 3-FACHVERGLASUNG</span></div>
<div style="left:907.00px;top:687.00px;width:264.00px;height:1.00px;background:#EFEFEF;"></div>
<span class="t" style="left:908.28px;top:671.00px;font-family:'DejaVu Sans Condensed','DejaVu Sans','Liberation Sans',sans-serif;font-size:11.00px;line-height:16px;color:#000;letter-spacing:-0.090px;">Sproß</span>
<div style="left:1012.20px;top:669.60px;width:158.80px;height:17.60px;overflow:hidden"><span class="t" style="left:1.28px;top:1.40px;font-family:'DejaVu Sans Condensed','DejaVu Sans','Liberation Sans',sans-serif;font-size:11.00px;line-height:16px;color:#000;letter-spacing:1.062px;">-</span></div>
<div style="left:907.00px;top:706.00px;width:264.00px;height:1.00px;background:#EFEFEF;"></div>
<span class="t" style="left:908.28px;top:690.00px;font-family:'DejaVu Sans Condensed','DejaVu Sans','Liberation Sans',sans-serif;font-size:11.00px;line-height:16px;color:#000;letter-spacing:-0.154px;">Kopplung (Höhe)</span>
<div style="left:1012.20px;top:688.60px;width:158.80px;height:17.60px;overflow:hidden"><span class="t" style="left:1.28px;top:1.40px;font-family:'DejaVu Sans Condensed','DejaVu Sans','Liberation Sans',sans-serif;font-size:11.00px;line-height:16px;color:#000;letter-spacing:1.062px;">-</span></div>
<div style="left:907.00px;top:725.00px;width:264.00px;height:1.00px;background:#EFEFEF;"></div>
<span class="t" style="left:908.28px;top:709.00px;font-family:'DejaVu Sans Condensed','DejaVu Sans','Liberation Sans',sans-serif;font-size:11.00px;line-height:16px;color:#000;letter-spacing:-0.190px;">Kopplung (Breite)</span>
<div style="left:1012.20px;top:707.60px;width:158.80px;height:17.60px;overflow:hidden"><span class="t" style="left:1.28px;top:1.40px;font-family:'DejaVu Sans Condensed','DejaVu Sans','Liberation Sans',sans-serif;font-size:11.00px;line-height:16px;color:#000;letter-spacing:1.062px;">-</span></div>
<div style="left:907.00px;top:744.00px;width:264.00px;height:1.00px;background:#EFEFEF;"></div>
<span class="t" style="left:908.28px;top:728.00px;font-family:'DejaVu Sans Condensed','DejaVu Sans','Liberation Sans',sans-serif;font-size:11.00px;line-height:16px;color:#000;letter-spacing:-0.087px;">Fensterleiste</span>
<div style="left:1012.20px;top:726.60px;width:158.80px;height:17.60px;overflow:hidden"><span class="t" style="left:1.28px;top:1.40px;font-family:'DejaVu Sans Condensed','DejaVu Sans','Liberation Sans',sans-serif;font-size:11.00px;line-height:16px;color:#000;letter-spacing:-0.151px;">FENSTERBANKANSCHLUSSLEISTE</span></div>
<div style="left:1011.00px;top:422.00px;width:1.00px;height:325.00px;background:#EFEFEF;"></div>
<div style="left:907.40px;top:753.40px;width:132.80px;height:4.80px;overflow:hidden"><span class="t" style="left:1.68px;top:-0.40px;font-family:'DejaVu Sans Condensed','DejaVu Sans','Liberation Sans',sans-serif;font-size:11.00px;line-height:16px;color:#000;letter-spacing:-0.368px;">HOFF</span></div>
<span class="t" style="left:20.36px;top:97.00px;font-family:'DejaVu Sans Condensed','DejaVu Sans','Liberation Sans',sans-serif;font-size:11.00px;line-height:16px;color:#000;letter-spacing:0.017px;">Angebot</span>
<span class="t" style="left:89.96px;top:97.00px;font-family:'DejaVu Sans Condensed','DejaVu Sans','Liberation Sans',sans-serif;font-size:11.00px;line-height:16px;color:#000;letter-spacing:-0.113px;">Fensterbestellung</span>
<span class="t" style="left:202.76px;top:97.00px;font-family:'DejaVu Sans Condensed','DejaVu Sans','Liberation Sans',sans-serif;font-size:11.00px;line-height:16px;color:#000;letter-spacing:-0.262px;">Einleitung</span>
<span class="t" style="left:273.96px;top:97.00px;font-family:'DejaVu Sans Condensed','DejaVu Sans','Liberation Sans',sans-serif;font-size:11.00px;line-height:16px;color:#000;letter-spacing:-0.226px;">Schluss</span>
<span class="t" style="left:337.48px;top:97.00px;font-family:'DejaVu Sans Condensed','DejaVu Sans','Liberation Sans',sans-serif;font-size:11.00px;line-height:16px;color:#000;letter-spacing:-0.345px;">Zusammenfassung</span>
<span class="t" style="left:455.08px;top:97.00px;font-family:'DejaVu Sans Condensed','DejaVu Sans','Liberation Sans',sans-serif;font-size:11.00px;line-height:16px;color:#000;letter-spacing:-0.229px;">Preiserstellung alle</span>
<span class="t" style="left:581.16px;top:97.00px;font-family:'DejaVu Sans Condensed','DejaVu Sans','Liberation Sans',sans-serif;font-size:11.00px;line-height:16px;color:#000;letter-spacing:-0.116px;">Optionen</span>
<span class="t" style="left:651.08px;top:97.00px;font-family:'DejaVu Sans Condensed','DejaVu Sans','Liberation Sans',sans-serif;font-size:11.00px;line-height:16px;color:#000;letter-spacing:-0.160px;">Seitenansicht</span>
<span class="t" style="left:741.80px;top:97.00px;font-family:'DejaVu Sans Condensed','DejaVu Sans','Liberation Sans',sans-serif;font-size:11.00px;line-height:16px;color:#000;letter-spacing:-0.181px;">Drucken</span>
<span class="t" style="left:814.28px;top:97.00px;font-family:'DejaVu Sans Condensed','DejaVu Sans','Liberation Sans',sans-serif;font-size:11.00px;line-height:16px;color:#000;letter-spacing:0.220px;">Word</span>
<span class="t" style="left:873.80px;top:97.00px;font-family:'DejaVu Sans Condensed','DejaVu Sans','Liberation Sans',sans-serif;font-size:11.00px;line-height:16px;color:#000;letter-spacing:0.729px;">Pdf</span>
<span class="t" style="left:919.08px;top:97.00px;font-family:'DejaVu Sans Condensed','DejaVu Sans','Liberation Sans',sans-serif;font-size:11.00px;line-height:16px;color:#000;letter-spacing:0.122px;">Export</span>
<div style="left:887.00px;top:109.00px;width:4.00px;height:0.96px;background:#000;"></div>
<div style="left:919.80px;top:109.00px;width:5.60px;height:0.96px;background:#000;"></div>
<div style="left:563.00px;top:74.20px;width:1.20px;height:38.80px;background:#C4C4C4;"></div>
<div style="left:1129.20px;top:69.00px;width:59.80px;height:44.00px;background:#F4F4F4;"></div>
<div style="left:1130.60px;top:70.40px;width:57.20px;height:41.20px;background:#F9F9F9;border:1px solid #EFEFEF;border-radius:3px;"></div>
<span class="t" style="left:1133.08px;top:95.00px;font-family:'DejaVu Sans Condensed','DejaVu Sans','Liberation Sans',sans-serif;font-size:11.00px;line-height:16px;color:#A2A2A2;letter-spacing:-0.215px;">Speichern</span>
<svg style="left:32px;top:73px;width:23px;height:23px;" viewBox="39.75 91.50 28.75 28.75"><path d="M46.6 97.0H55.0L60.2 102.2V114.8Q60.2 115.8 59.2 115.8H46.6Q45.6 115.8 45.6 114.8V98.0Q45.6 97.0 46.6 97.0Z" fill="#fff" stroke="#6E6E6E" stroke-width="1.6" stroke-linejoin="round"/><path d="M55.0 97.0V101.2Q55.0 102.2 56.0 102.2H60.2" fill="none" stroke="#6E6E6E" stroke-width="1.6" stroke-linejoin="round"/><path d="M48.4 102.2H52" stroke="#8FB2DC" stroke-width="1.4"/><path d="M48.4 104.6H57.2" stroke="#4F86C6" stroke-width="1.4"/><path d="M48.4 107.2H57.2" stroke="#8FB0D6" stroke-width="1.4"/><path d="M48.4 109.6H57.2" stroke="#4F86C6" stroke-width="1.4"/><path d="M48.4 112.2H57.2" stroke="#8FB0D6" stroke-width="1.4"/></svg>
<svg style="left:123px;top:73px;width:23px;height:23px;" viewBox="153.50 91.50 28.75 28.75"><path d="M160.2 97.0H169.8L174.4 101.6V113.6Q174.4 114.6 173.4 114.6H160.2Q159.2 114.6 159.2 113.6V98.0Q159.2 97.0 160.2 97.0Z" fill="#fff" stroke="#6E6E6E" stroke-width="1.6" stroke-linejoin="round"/><path d="M169.8 97.0V100.6Q169.8 101.6 170.8 101.6H174.4" fill="none" stroke="#6E6E6E" stroke-width="1.6" stroke-linejoin="round"/><path d="M162 100.8H166" stroke="#8FB2DC" stroke-width="1.4"/><path d="M162 103.4H166" stroke="#4F86C6" stroke-width="1.4"/><path d="M162 106H166" stroke="#8FB0D6" stroke-width="1.4"/><path d="M162 108.6H166" stroke="#4F86C6" stroke-width="1.4"/><path d="M162 111H166" stroke="#8FB0D6" stroke-width="1.4"/><circle cx="173" cy="110.8" r="6" fill="#139B5B"/><path d="M169.6 110.8L172.2 113.4L176.6 108.4" fill="none" stroke="#fff" stroke-width="1.9"/></svg>
<svg style="left:216px;top:75px;width:23px;height:20px;" viewBox="269.75 94.00 28.75 25.00"><path d="M275.6 99.8H288L292 103.8V111.2H289L286.4 109.4L284.6 108.2L282.4 109.6L280.4 111.2L278.4 109.8L275.6 108.6Z" fill="#FAFBFD" stroke="#838A95" stroke-width="1.15" stroke-linejoin="round"/><path d="M287 100V104.4H292" fill="none" stroke="#6A6FA8" stroke-width="1.2"/></svg>
<svg style="left:283px;top:76px;width:23px;height:19px;" viewBox="353.50 95.25 28.75 23.75"><path d="M359 112.2V102.4L361.4 102.2L364 104.6L366.2 103.6L368.4 102L371 103.4L372.4 104.6H375.4V112.2Z" fill="#E9EDF5" stroke="#7A828E" stroke-width="1.2" stroke-linejoin="round"/><path d="M360.6 110.6H374" stroke="#fff" stroke-width="1"/></svg>
<span class="t" style="left:375.56px;top:76.00px;font-family:'Liberation Serif','DejaVu Serif',serif;font-size:21.60px;line-height:16px;color:#000;font-weight:bold;transform-origin:0 0;transform:scaleX(1.0988);">Σ</span>
<svg style="left:489px;top:73px;width:22px;height:23px;" viewBox="611.00 91.50 27.50 28.75"><defs><linearGradient id="cg" x1="0" y1="0" x2="0" y2="1"><stop offset="0" stop-color="#C8C8C8"/><stop offset="1" stop-color="#8E8E8E"/></linearGradient></defs><rect x="617.2" y="96.2" width="14.9" height="20.2" rx="1" fill="url(#cg)"/><rect x="618.8" y="98.2" width="11.8" height="17" fill="#D4D4D4"/><rect x="619.2" y="98.4" width="11" height="5.6" fill="#fff"/><rect x="620" y="99" width="9.6" height="4" fill="#4A8AD8"/><rect x="620.0" y="105.0" width="2.4" height="1.5" fill="#6E6E6E"/><rect x="623.7" y="105.0" width="2.4" height="1.5" fill="#6E6E6E"/><rect x="627.4" y="105.0" width="2.4" height="1.5" fill="#E0595B"/><rect x="620.0" y="107.6" width="2.4" height="1.5" fill="#6E6E6E"/><rect x="623.7" y="107.6" width="2.4" height="1.5" fill="#6E6E6E"/><rect x="627.4" y="107.6" width="2.4" height="1.5" fill="#6E6E6E"/><rect x="620.0" y="110.2" width="2.4" height="1.5" fill="#6E6E6E"/><rect x="623.7" y="110.2" width="2.4" height="1.5" fill="#6E6E6E"/><rect x="627.4" y="110.2" width="2.4" height="1.5" fill="#6E6E6E"/><rect x="620.0" y="112.8" width="2.4" height="1.5" fill="#6E6E6E"/><rect x="623.7" y="112.8" width="2.4" height="1.5" fill="#6E6E6E"/><rect x="627.4" y="112.8" width="2.4" height="1.5" fill="#6E6E6E"/></svg>
<svg style="left:593px;top:75px;width:20px;height:20px;" viewBox="741.00 94.00 25.00 25.00"><rect x="746.4" y="98" width="14.6" height="15" fill="#fff"/><path d="M747 112.8V98.4H761" fill="none" stroke="#7F7F7F" stroke-width="2"/><path d="M747 112.4H760.4V99" fill="none" stroke="#D2D2D2" stroke-width="1"/><path d="M750.4 105.6L753.4 109L758.6 103.4" fill="none" stroke="#000" stroke-width="2.2" stroke-linecap="round" stroke-linejoin="round"/></svg>
<svg style="left:675px;top:73px;width:22px;height:23px;" viewBox="843.50 91.50 27.50 28.75"><path d="M850.2 97.0H858.6L863.2 101.6V114.8Q863.2 115.8 862.2 115.8H850.2Q849.2 115.8 849.2 114.8V98.0Q849.2 97.0 850.2 97.0Z" fill="#fff" stroke="#6E6E6E" stroke-width="1.6" stroke-linejoin="round"/><path d="M858.6 97.0V100.6Q858.6 101.6 859.6 101.6H863.2" fill="none" stroke="#6E6E6E" stroke-width="1.6" stroke-linejoin="round"/><circle cx="858.4" cy="109" r="4.1" fill="#fff" stroke="#1F69B6" stroke-width="1.8"/><path d="M861.6 112.2L865.6 116" stroke="#1F69B6" stroke-width="2.2" stroke-linecap="round"/></svg>
<svg style="left:752px;top:73px;width:25px;height:23px;" viewBox="939.75 91.50 31.25 28.75"><rect x="950.6" y="97" width="9" height="5" rx="0.8" fill="#fff" stroke="#808080" stroke-width="1.4"/><path d="M945.2 102.4H947.2V106.6H962.6V102.4H964.6V110.6Q964.6 111.4 963.8 111.4H946Q945.2 111.4 945.2 110.6Z" fill="#7E7E7E"/><rect x="948.6" y="100.4" width="12.4" height="4.6" rx="0.5" fill="#3B78BE"/><rect x="946.4" y="108.8" width="2.6" height="1.2" fill="#fff"/><rect x="950.6" y="110" width="9" height="6" rx="0.8" fill="#fff" stroke="#808080" stroke-width="1.4"/><path d="M952.2 113.4H957" stroke="#6E9BD0" stroke-width="1"/></svg>
<svg style="left:816px;top:73px;width:44px;height:25px;" viewBox="1019.75 91.50 55.00 31.25"><path d="M1028 97H1039L1044.2 102.4V115.8H1028Z" fill="#fff" stroke="#9C9C9C" stroke-width="1.6" stroke-linejoin="round"/><path d="M1038 102.6H1042.6V114.4H1038Z" fill="#ECECEC"/><rect x="1025.6" y="102" width="11" height="11.2" fill="#fff" stroke="#4F62BE" stroke-width="1.4"/><path d="M1027.4 105.4L1029.4 111L1031.4 106.4L1033 111L1035.4 105.4" fill="none" stroke="#3E63C4" stroke-width="1.7" stroke-linejoin="round"/><path d="M1063.2 115.4H1070L1066.6 119Z" fill="#000"/></svg>
<svg style="left:870px;top:73px;width:39px;height:25px;" viewBox="1087.25 91.50 48.75 31.25"><defs><linearGradient id="pg" x1="0" y1="0" x2="0" y2="1"><stop offset="0" stop-color="#EE0000"/><stop offset="1" stop-color="#B40000"/></linearGradient></defs><path d="M1097 97H1107.4L1113 102.6V115.8H1097Z" fill="#fff" stroke="#9C9C9C" stroke-width="1.6" stroke-linejoin="round"/><path d="M1106.4 103.4H1111.4V114.4H1106.4Z" fill="#ECECEC"/><rect x="1093.4" y="101.4" width="12.6" height="12.4" fill="url(#pg)"/><path d="M1096.6 111L1100.2 104.4L1103.4 109.6Z" fill="none" stroke="#fff" stroke-width="0.9" stroke-linejoin="round"/><path d="M1125.8 115.4H1132.4L1129.1 119Z" fill="#000"/></svg>
<svg style="left:925px;top:73px;width:23px;height:23px;" viewBox="1156.00 91.50 28.75 28.75"><defs><linearGradient id="eg" x1="0" y1="0" x2="0" y2="1"><stop offset="0" stop-color="#0A7D0A"/><stop offset="0.3" stop-color="#E8F000"/><stop offset="0.55" stop-color="#12A812"/><stop offset="1" stop-color="#066806"/></linearGradient></defs><path d="M1161.8 114.4V97H1171.4L1175.6 101.2V105" fill="#F4F6FB" stroke="#6E7682" stroke-width="1.5"/><path d="M1161.8 114.4H1167.4" stroke="#4F5662" stroke-width="1.5"/><path d="M1170.6 97.6V102H1175.6" fill="none" stroke="#8E90C0" stroke-width="1.2"/><path d="M1168.6 108H1173.6V105.2L1180 110.9L1173.6 116.6V113.8H1168.6Z" fill="url(#eg)" stroke="#0B6E0B" stroke-width="0.6"/></svg>
<svg style="left:6px;top:6px;width:22px;height:18px;filter:blur(0.5px);" viewBox="7.25 7.75 27.50 22.50"><g fill="#3B75B4"><path d="M10.8 15.6L17.4 13.6L19.6 21L12.2 23Z"/><path d="M20 13.2L27 11.2L29 18.4L21.4 20.2Z"/><path d="M13.2 24.4L20.6 22.8L21 26.8H13.8Z"/><path d="M22.2 22.6L29.8 20.2L31.2 26.6L23.6 26.8Z"/></g></svg>
<svg style="left:1072px;top:6px;width:116px;height:20px;" viewBox="1339.75 7.75 145.00 25.00"><g fill="none" stroke="#fff" stroke-width="1.1"><path d="M1347 19.6H1359"/><rect x="1405.4" y="14" width="11.6" height="11.6" rx="1.6"/><path d="M1464.6 14L1476.4 25.8M1476.4 14L1464.6 25.8"/></g></svg>
<svg style="left:1176px;top:43px;width:17px;height:12px;" viewBox="1469.75 54.00 21.25 15.00"><path d="M1475.4 59.6L1480.2 64.2L1485 59.6" fill="none" stroke="#5F5F5F" stroke-width="1.3"/></svg>
<svg style="left:16px;top:156px;width:17px;height:12px;" viewBox="19.75 195.25 21.25 15.00"><path d="M23.2 200.2H35.4L29.3 206.8Z" fill="#000"/></svg>
<svg style="left:16px;top:247px;width:17px;height:19px;" viewBox="19.75 309.00 21.25 23.75"><path d="M26.2 314.4L33 320.8L26.2 327.4" fill="none" stroke="#000" stroke-width="1.9"/><rect x="26" y="319.4" width="2.2" height="2.8" fill="#000"/></svg>
<svg style="left:907px;top:150px;width:282px;height:250px;" viewBox="1133.50 187.75 352.50 312.50"><path d="M1152.6 433.2V284.6A87.5 86.9 0 0 1 1327.6 284.6V433.2Z" fill="none" stroke="#000" stroke-width="1.0"/><path d="M1155.1 430.7V284.6A85.0 84.4 0 0 1 1325.1 284.6V430.7Z" fill="none" stroke="#000" stroke-width="1.0"/><path d="M1155 285L1325 285" stroke="#000" stroke-width="1.0"/><path d="M1155 287.6L1325 287.6" stroke="#000" stroke-width="1.0"/><path d="M1239.2 287L1239.2 431" stroke="#000" stroke-width="1.0"/><path d="M1241.4 287L1241.4 431" stroke="#000" stroke-width="1.0"/><path d="M1164.5 275.6A76.2 76.2 0 0 1 1315.9 275.6" fill="none" stroke="#000" stroke-width="1.0"/><path d="M1166.5 275.6A74.2 74.2 0 0 1 1313.9 275.6" fill="none" stroke="#000" stroke-width="1.0"/><path d="M1164 275.8L1316.4 275.8" stroke="#000" stroke-width="2.0"/><path d="M1164.6 275.4L1240.2 209.6L1316 275.4" fill="none" stroke="#000" stroke-width="2.0" stroke-linejoin="miter"/><rect x="1162.2" y="293.6" width="70.4" height="129.8" fill="none" stroke="#000" stroke-width="1.0"/><rect x="1164.4" y="296.2" width="66.2" height="126.2" fill="none" stroke="#000" stroke-width="2.0"/><path d="M1164.4 338L1230.6 338" stroke="#000" stroke-width="2.0"/><path d="M1164.4 380.4L1230.6 380.4" stroke="#000" stroke-width="2.0"/><rect x="1247.6" y="293.6" width="71.0" height="129.8" fill="none" stroke="#000" stroke-width="1.0"/><rect x="1250.6" y="296.2" width="66.0" height="126.2" fill="none" stroke="#000" stroke-width="2.0"/><path d="M1250.6 338L1316.6 338" stroke="#000" stroke-width="2.0"/><path d="M1250.6 380.4L1316.6 380.4" stroke="#000" stroke-width="2.0"/><path d="M1197.4 296.2L1197.4 357.6" stroke="#000" stroke-width="2.0"/><path d="M1197.4 375L1197.4 422.4" stroke="#000" stroke-width="2.0"/><path d="M1283.4 296.2L1283.4 357.6" stroke="#000" stroke-width="2.0"/><path d="M1283.4 375L1283.4 422.4" stroke="#000" stroke-width="2.0"/><path d="M1164.6 296.6L1230.2 359.2L1164.6 422" fill="none" stroke="#000" stroke-width="2.0"/><path d="M1316.4 296.6L1250.8 359.2L1316.4 422" fill="none" stroke="#000" stroke-width="2.0"/><path d="M1251.4 422L1283.4 296.6L1315.8 422" fill="none" stroke="#000" stroke-width="1.5"/><path d="M1154.2 436.8L1154.2 471.6" stroke="#000" stroke-width="1.0"/><path d="M1240.4 436.8L1240.4 454" stroke="#000" stroke-width="1.0"/><path d="M1326.8 436.8L1326.8 471.6" stroke="#000" stroke-width="1.0"/><path d="M1154.2 446L1183.4 446" stroke="#000" stroke-width="1.0"/><path d="M1208.8 446L1269.6 446" stroke="#000" stroke-width="1.0"/><path d="M1295 446L1326.8 446" stroke="#000" stroke-width="1.0"/><path d="M1154.2 463.4L1223.4 463.4" stroke="#000" stroke-width="1.0"/><path d="M1256 463.4L1326.8 463.4" stroke="#000" stroke-width="1.0"/><path d="M1331 199.4L1366 199.4" stroke="#000" stroke-width="1.0"/><path d="M1331 285.8L1348.6 285.8" stroke="#000" stroke-width="1.0"/><path d="M1331 431.8L1366 431.8" stroke="#000" stroke-width="1.0"/><path d="M1340.4 199.4L1340.4 431.8" stroke="#000" stroke-width="1.0"/><path d="M1358.2 199.4L1358.2 431.8" stroke="#000" stroke-width="1.0"/></svg>
<span class="t" style="left:986.60px;top:193.00px;font-family:'DejaVu Sans Condensed','DejaVu Sans','Liberation Sans',sans-serif;font-size:11.00px;line-height:16px;color:#1A1A1A;letter-spacing:1.500px;">K</span>
<span class="t" style="left:950.68px;top:286.00px;font-family:'DejaVu Sans Condensed','DejaVu Sans','Liberation Sans',sans-serif;font-size:11.00px;line-height:16px;color:#1A1A1A;letter-spacing:0.230px;">DL</span>
<span class="t" style="left:1013.56px;top:286.00px;font-family:'DejaVu Sans Condensed','DejaVu Sans','Liberation Sans',sans-serif;font-size:11.00px;line-height:16px;color:#1A1A1A;letter-spacing:0.200px;">DKR</span>
<span class="t" style="left:948.20px;top:356.00px;font-family:'DejaVu Sans Condensed','DejaVu Sans','Liberation Sans',sans-serif;font-size:11.00px;line-height:16px;color:#1A1A1A;letter-spacing:-0.430px;">740</span>
<span class="t" style="left:1017.16px;top:356.00px;font-family:'DejaVu Sans Condensed','DejaVu Sans','Liberation Sans',sans-serif;font-size:11.00px;line-height:16px;color:#1A1A1A;letter-spacing:-0.430px;">740</span>
<span class="t" style="left:980.60px;top:370.00px;font-family:'DejaVu Sans Condensed','DejaVu Sans','Liberation Sans',sans-serif;font-size:11.00px;line-height:16px;color:#1A1A1A;letter-spacing:-0.417px;">1480</span>
<span class="t" style="left:912.84px;top:383.00px;font-family:'DejaVu Sans Condensed','DejaVu Sans','Liberation Sans',sans-serif;font-size:11.00px;line-height:16px;color:#1A1A1A;">*</span>
<span class="t" style="left:1075.93px;top:182.40px;font-family:'DejaVu Sans Condensed','DejaVu Sans','Liberation Sans',sans-serif;font-size:11.00px;line-height:16px;color:#1A1A1A;letter-spacing:-0.217px;transform-origin:9.23px 11.00px;transform:rotate(-90deg);">740</span>
<span class="t" style="left:1087.13px;top:241.44px;font-family:'DejaVu Sans Condensed','DejaVu Sans','Liberation Sans',sans-serif;font-size:11.00px;line-height:16px;color:#1A1A1A;letter-spacing:-0.217px;transform-origin:12.27px 11.00px;transform:rotate(-90deg);">2000</span>
<span class="t" style="left:1072.89px;top:275.52px;font-family:'DejaVu Sans Condensed','DejaVu Sans','Liberation Sans',sans-serif;font-size:11.00px;line-height:16px;color:#1A1A1A;letter-spacing:-0.217px;transform-origin:12.27px 11.00px;transform:rotate(-90deg);">1260</span>
</div></div>
</body></html>
